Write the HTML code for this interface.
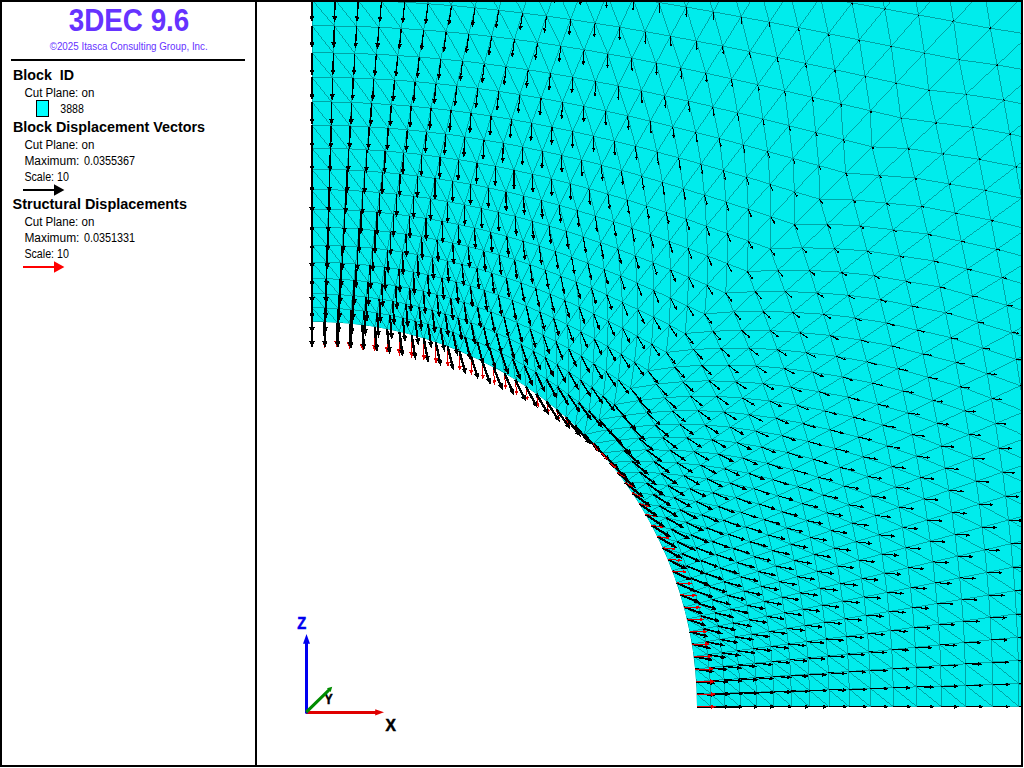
<!DOCTYPE html>
<html lang="en"><head><meta charset="utf-8"><title>3DEC 9.6</title>
<style>html,body{margin:0;padding:0;background:#fff;overflow:hidden}svg{display:block;position:absolute;left:0;top:0}text{white-space:pre}</style></head>
<body>
<svg width="1024" height="768" viewBox="0 0 1024 768" font-family='"Liberation Sans", sans-serif'>
<defs><clipPath id="v"><rect x="257" y="2" width="764" height="763"/></clipPath><clipPath id="m"><path d="M312 2L1021 2L1021 706.7L697 706.7A385 385 0 0 0 312 321.7Z"/></clipPath></defs>
<rect width="1024" height="768" fill="#fff"/>
<g clip-path="url(#v)">
<path d="M312 2L1021 2L1021 706.7L697 706.7A385 385 0 0 0 312 321.7Z" fill="#00ecec"/>
<g clip-path="url(#m)" fill="none" stroke="#00999a" stroke-width="0.85" shape-rendering="crispEdges">
<path d="M312 321.7L324.6 321.9L337.2 322.5L349.7 323.6L362.3 325L374.7 326.8L387.1 329.1L399.4 331.8L411.6 334.8L423.8 338.3L435.8 342.1L447.6 346.4L459.3 351L470.9 356L482.3 361.4L493.5 367.2L504.5 373.3L515.3 379.8L525.9 386.6L536.3 393.8L546.4 401.3L556.2 409.1L565.8 417.2L575.2 425.7L584.2 434.5L593 443.5L601.5 452.9L609.6 462.5L617.4 472.3L624.9 482.4L632.1 492.8L638.9 503.4L645.4 514.2L651.5 525.2L657.3 536.4L662.7 547.8L667.7 559.4L672.3 571.1L676.6 582.9L680.4 594.9L683.9 607.1L686.9 619.3L689.6 631.6L691.9 644L693.7 656.4L695.1 669L696.2 681.5L696.8 694.1L697 706.7M312 307.8L325.1 308L338.1 308.6L351.1 309.6L364.1 311.1L377 312.9L389.9 315.1L402.7 317.8L415.4 320.8L428 324.2L440.5 328.1L452.9 332.3L465.2 336.9L477.3 341.8L489.3 347.2L501.1 352.9L512.8 358.9L524.3 365.4L535.6 372.1L546.7 379.2L557.6 386.7L568.3 394.4L578.8 402.5L589 410.9L599.1 419.6L607.8 429.7L616.2 439.9L624.3 450.4L632 461.1L639.5 472L646.6 483.1L653.3 494.4L659.8 505.9L665.8 517.6L671.5 529.4L676.9 541.4L681.8 553.5L686.4 565.8L690.6 578.2L694.5 590.7L697.9 603.3L700.9 616L703.6 628.8L705.8 641.7L707.6 654.6L709.1 667.6L710.1 680.6L710.7 693.6L710.9 706.7M312 293.8L325.5 294L339 294.6L352.5 295.6L365.9 297L379.3 298.9L392.7 301.1L406 303.7L419.2 306.7L432.3 310.1L445.3 313.9L458.3 318L471.1 322.6L483.8 327.5L496.4 332.8L508.8 338.5L521.1 344.5L533.3 350.9L545.3 357.6L557.1 364.6L568.8 372L580.4 379.7L591.8 387.7L603 396L614.1 404.6L622.7 415.7L631 426.9L639 438.3L646.7 449.9L654.1 461.6L661.1 473.4L667.8 485.4L674.2 497.6L680.2 509.9L685.9 522.3L691.2 534.9L696.1 547.6L700.7 560.4L704.8 573.4L708.6 586.4L712 599.5L715 612.7L717.6 626L719.8 639.4L721.7 652.8L723.1 666.2L724.1 679.7L724.7 693.2L724.9 706.7M312 278.5L326 278.7L340 279.3L354 280.3L368 281.7L381.9 283.5L395.7 285.7L409.6 288.3L423.3 291.3L437 294.6L450.6 298.4L464.1 302.5L477.6 307L490.9 311.9L504.1 317.1L517.2 322.7L530.2 328.7L543.1 335L555.9 341.6L568.6 348.6L581.2 355.9L593.6 363.6L606 371.5L618.2 379.7L630.5 388.2L639 400.5L647.2 412.7L655.1 425.1L662.8 437.5L670.1 450.1L677.1 462.8L683.7 475.6L690 488.5L696 501.5L701.6 514.6L706.8 527.8L711.7 541.1L716.2 554.6L720.3 568.1L724.1 581.7L727.4 595.4L730.4 609.1L733 623L735.2 636.8L737 650.7L738.4 664.7L739.4 678.7L740 692.7L740.2 706.7M312 262.2L326.5 262.4L341.1 263L355.6 264L370.1 265.4L384.6 267.2L399 269.3L413.4 271.9L427.7 274.8L442 278.2L456.2 281.9L470.4 286L484.4 290.4L498.4 295.3L512.3 300.4L526.2 306L539.9 311.9L553.6 318.1L567.2 324.7L580.8 331.6L594.3 338.8L607.7 346.4L621.1 354.2L634.5 362.4L647.9 370.8L656.3 384.2L664.5 397.6L672.3 411L679.9 424.4L687.1 437.9L694 451.5L700.6 465.1L706.8 478.8L712.7 492.5L718.3 506.4L723.4 520.3L728.3 534.3L732.7 548.3L736.8 562.5L740.5 576.7L743.9 591L746.8 605.3L749.4 619.7L751.5 634.1L753.3 648.6L754.7 663.1L755.7 677.6L756.3 692.2L756.5 706.7M312 245L327.1 245.2L342.2 245.8L357.3 246.8L372.4 248.1L387.4 249.9L402.4 252L417.4 254.6L432.4 257.5L447.3 260.8L462.1 264.5L476.9 268.5L491.7 272.9L506.4 277.7L521 282.8L535.6 288.3L550.2 294.1L564.7 300.3L579.2 306.8L593.7 313.6L608.1 320.8L622.6 328.2L637.1 336L651.6 344.1L666.3 352.4L674.6 367.1L682.7 381.6L690.5 396.1L697.9 410.6L705.1 425L711.9 439.5L718.4 454L724.6 468.5L730.4 483.1L735.9 497.7L741 512.3L745.8 527L750.2 541.8L754.2 556.6L757.9 571.4L761.2 586.3L764.1 601.3L766.7 616.3L768.8 631.3L770.6 646.3L771.9 661.4L772.9 676.5L773.5 691.6L773.7 706.7M312 227.3L327.7 227.5L343.4 228.1L359 229L374.7 230.4L390.3 232.1L406 234.3L421.6 236.8L437.1 239.7L452.7 242.9L468.2 246.5L483.7 250.5L499.1 254.9L514.6 259.6L530 264.7L545.4 270.1L560.7 275.9L576.1 282L591.5 288.4L606.9 295.1L622.4 302.2L637.9 309.6L653.5 317.3L669.3 325.2L685.2 333.5L693.5 349.4L701.4 365.2L709.1 380.8L716.5 396.3L723.6 411.8L730.3 427.2L736.7 442.6L742.8 458L748.6 473.3L754 488.7L759.1 504.1L763.8 519.6L768.2 535L772.2 550.5L775.8 566L779 581.6L781.9 597.1L784.4 612.7L786.6 628.4L788.3 644L789.7 659.7L790.6 675.3L791.2 691L791.4 706.7M312 209.1L328.3 209.3L344.6 209.9L360.8 210.8L377.1 212.2L393.4 213.9L409.6 216L425.8 218.5L442.1 221.3L458.3 224.5L474.5 228.1L490.6 232.1L506.8 236.4L523 241L539.2 246L555.4 251.4L571.6 257.1L587.8 263.1L604.2 269.5L620.5 276.1L637 283.1L653.7 290.4L670.4 298L687.4 305.9L704.7 314L712.8 331.3L720.7 348.3L728.3 365L735.6 381.7L742.6 398.2L749.2 414.5L755.6 430.9L761.6 447.1L767.3 463.3L772.7 479.5L777.7 495.7L782.3 511.9L786.6 528.1L790.6 544.2L794.2 560.4L797.4 576.6L800.2 592.9L802.7 609.1L804.8 625.3L806.5 641.6L807.9 657.9L808.8 674.1L809.4 690.4L809.6 706.7M312 189.5L328.9 189.7L345.8 190.3L362.8 191.2L379.7 192.5L396.6 194.2L413.5 196.3L430.4 198.7L447.4 201.5L464.3 204.7L481.2 208.3L498.1 212.2L515.1 216.4L532.1 221L549.1 226L566.1 231.2L583.3 236.9L600.5 242.8L617.8 249.1L635.2 255.7L652.8 262.5L670.6 269.7L688.6 277.2L707 285L725.7 293L733.7 311.7L741.5 330.1L749 348.1L756.2 365.9L763 383.5L769.6 400.9L775.9 418.2L781.8 435.4L787.5 452.6L792.7 469.6L797.7 486.6L802.3 503.6L806.5 520.6L810.4 537.5L814 554.4L817.2 571.3L820 588.3L822.4 605.2L824.5 622.1L826.2 639L827.5 655.9L828.4 672.9L829 689.8L829.2 706.7M312 169.3L329.6 169.5L347.2 170L364.8 171L382.4 172.3L400 174L417.6 176L435.2 178.4L452.8 181.2L470.5 184.3L488.1 187.8L505.9 191.6L523.6 195.8L541.4 200.4L559.3 205.3L577.2 210.5L595.3 216L613.5 221.9L631.8 228.1L650.3 234.6L669.1 241.4L688.1 248.4L707.4 255.8L727.1 263.5L747.3 271.4L755.2 291.6L762.9 311.3L770.3 330.6L777.3 349.6L784.1 368.4L790.6 386.9L796.8 405.2L802.7 423.4L808.2 441.5L813.4 459.4L818.3 477.3L822.9 495.1L827.1 512.8L830.9 530.6L834.4 548.2L837.5 565.9L840.3 583.5L842.7 601.1L844.7 618.7L846.4 636.3L847.7 653.9L848.7 671.5L849.2 689.1L849.4 706.7M312 148.1L330.3 148.3L348.6 148.8L366.9 149.8L385.2 151L403.5 152.7L421.8 154.7L440.2 157.1L458.5 159.8L477 162.9L495.4 166.3L514 170.1L532.5 174.3L551.2 178.7L570 183.5L588.9 188.7L607.9 194.1L627.1 199.9L646.6 206L666.2 212.4L686.1 219.1L706.4 226.1L727.1 233.4L748.2 240.9L770 248.7L777.8 270.5L785.3 291.6L792.6 312.3L799.6 332.6L806.3 352.5L812.7 372.1L818.8 391.6L824.6 410.8L830 429.8L835.2 448.7L840 467.5L844.4 486.2L848.6 504.7L852.4 523.3L855.8 541.7L858.9 560.2L861.6 578.5L864 596.9L866 615.2L867.7 633.5L868.9 651.8L869.9 670.1L870.4 688.4L870.6 706.7M312 125.3L331 125.5L350.1 126L369.1 126.9L388.2 128.2L407.2 129.8L426.4 131.8L445.5 134.1L464.7 136.8L483.9 139.9L503.3 143.2L522.7 147L542.2 151L561.8 155.4L581.5 160.2L601.4 165.2L621.5 170.6L641.8 176.3L662.4 182.3L683.3 188.6L704.5 195.2L726.1 202.1L748.3 209.2L771 216.7L794.3 224.4L802 247.7L809.5 270.4L816.6 292.6L823.5 314.2L830.1 335.4L836.4 356.3L842.4 376.9L848.1 397.2L853.5 417.3L858.5 437.2L863.3 456.9L867.7 476.5L871.7 496L875.5 515.4L878.8 534.8L881.9 554L884.6 573.2L886.9 592.3L888.9 611.5L890.5 630.5L891.8 649.6L892.7 668.6L893.2 687.7L893.4 706.7M312 101.8L331.8 102L351.6 102.5L371.4 103.4L391.3 104.6L411.1 106.2L431.1 108.2L451 110.5L471 113.1L491.2 116.1L511.3 119.4L531.6 123.1L552.1 127.1L572.6 131.4L593.4 136.1L614.3 141.1L635.5 146.4L657 152L678.7 157.8L700.9 164L723.4 170.5L746.5 177.3L770.1 184.3L794.4 191.6L819.5 199.2L827.1 224.3L834.4 248.6L841.4 272.2L848.2 295.3L854.7 317.8L860.9 340L866.7 361.7L872.3 383.2L877.6 404.4L882.6 425.3L887.3 446.1L891.6 466.6L895.6 487.1L899.3 507.4L902.6 527.5L905.6 547.7L908.2 567.7L910.5 587.6L912.5 607.6L914.1 627.4L915.3 647.3L916.2 667.1L916.7 686.9L916.9 706.7M312 77.3L332.6 77.5L353.2 78L373.8 78.9L394.5 80.1L415.2 81.7L435.9 83.6L456.8 85.8L477.7 88.4L498.7 91.4L519.8 94.6L541 98.2L562.4 102.2L584 106.4L605.8 111L627.8 115.9L650.1 121.1L672.7 126.6L695.8 132.4L719.2 138.4L743.1 144.8L767.7 151.5L792.9 158.4L818.8 165.6L845.7 173L853.1 199.9L860.3 225.8L867.2 251L873.9 275.6L880.3 299.5L886.3 322.9L892.1 346L897.6 368.6L902.8 390.9L907.7 412.9L912.3 434.7L916.5 456.3L920.5 477.7L924.1 498.9L927.3 520L930.3 541L932.9 561.9L935.1 582.8L937 603.5L938.6 624.2L939.8 644.9L940.7 665.5L941.2 686.1L941.4 706.7M312 52.8L333.4 53L354.8 53.5L376.3 54.3L397.7 55.5L419.3 57.1L440.8 59L462.5 61.2L484.3 63.7L506.2 66.6L528.2 69.8L550.4 73.4L572.7 77.2L595.3 81.4L618.1 85.9L641.3 90.7L664.7 95.8L688.5 101.2L712.8 106.9L737.5 112.9L762.9 119.1L788.9 125.6L815.6 132.4L843.3 139.5L871.9 146.8L879.2 175.4L886.3 203.1L893.1 229.8L899.6 255.8L905.8 281.2L911.8 305.9L917.5 330.2L922.9 354L928 377.4L932.8 400.6L937.3 423.4L941.5 446L945.3 468.3L948.9 490.5L952.1 512.5L955 534.4L957.5 556.2L959.7 577.9L961.6 599.4L963.2 621L964.4 642.4L965.2 663.9L965.7 685.3L965.9 706.7M312 25.8L334.3 26L356.6 26.5L378.9 27.3L401.3 28.5L423.7 30L446.2 31.8L468.8 34L491.6 36.5L514.4 39.3L537.5 42.5L560.7 46L584.1 49.7L607.8 53.8L631.8 58.2L656.1 62.9L680.8 67.9L705.9 73.2L731.6 78.8L757.8 84.7L784.6 90.8L812.2 97.2L840.7 103.8L870.2 110.7L900.8 117.9L908 148.5L914.9 178L921.5 206.5L927.9 234.1L934 260.9L939.9 287.1L945.5 312.8L950.8 337.9L955.8 362.6L960.5 386.9L964.9 410.9L969 434.6L972.7 458L976.2 481.2L979.4 504.3L982.2 527.1L984.7 549.9L986.9 572.5L988.7 595L990.2 617.4L991.4 639.8L992.2 662.1L992.7 684.4L992.9 706.7M312 -0.3L335.1 -0.1L358.3 0.4L381.5 1.2L404.7 2.3L428 3.8L451.5 5.6L475 7.8L498.6 10.2L522.4 13L546.4 16.1L570.7 19.5L595.1 23.2L619.9 27.2L645 31.5L670.4 36.1L696.3 41L722.7 46.2L749.7 51.6L777.3 57.4L805.6 63.4L834.8 69.7L864.9 76.2L896.2 83L928.7 90L935.7 122.5L942.5 153.8L949 183.9L955.3 213.1L961.3 241.4L967.1 269L972.5 296L977.7 322.4L982.6 348.3L987.2 373.7L991.5 398.8L995.5 423.6L999.2 448L1002.6 472.3L1005.7 496.3L1008.5 520.1L1010.9 543.7L1013.1 567.2L1014.9 590.7L1016.4 614L1017.5 637.2L1018.3 660.4L1018.8 683.6L1019 706.7M312 -28.6L336.1 -28.4L360.2 -27.9L384.3 -27.1L408.5 -26L432.7 -24.6L457.1 -22.8L481.6 -20.7L506.3 -18.3L531.1 -15.6L556.2 -12.6L581.5 -9.3L607.1 -5.6L633 -1.7L659.3 2.5L686 7L713.2 11.8L741 16.9L769.3 22.2L798.5 27.8L828.4 33.7L859.3 39.9L891.2 46.2L924.4 52.9L959 59.7L965.8 94.3L972.5 127.5L978.8 159.4L985 190.3L990.9 220.2L996.5 249.4L1001.8 277.7L1006.9 305.5L1011.7 332.7L1016.2 359.4L1020.4 385.7L1024.3 411.6L1028 437.2L1031.3 462.5L1034.3 487.6L1037 512.4L1039.4 537.1L1041.5 561.6L1043.3 586L1044.7 610.2L1045.8 634.4L1046.6 658.5L1047.1 682.6L1047.3 706.7M619.5 -35.6L646.6 -31.7L674.1 -27.6L702.1 -23.2L730.7 -18.5L759.9 -13.6L789.8 -8.4L820.5 -2.9L852.1 2.9L884.7 8.9L918.5 15.1L953.7 21.6L990.4 28.3L997.1 65L1003.6 100.2L1009.8 134L1015.8 166.6L1021.6 198.2L1027.1 228.9L1032.3 258.8L1037.2 288L1041.9 316.6L1046.3 344.6L1050.4 372.1L1054.3 399.2L1057.8 426M843.4 -34.8L876.7 -29.2L911.2 -23.4L946.9 -17.3L984.2 -11L1023.2 -4.5L1029.7 34.5L1036 71.8L1042.1 107.5L1047.9 142L1053.5 175.3L1058.9 207.7"/>
<path d="M312 321.7L312 -425.2M324.6 321.9L349.1 -425.1M337.2 322.5L386.2 -424.8M349.7 323.6L423.4 -424.2M362.3 325L460.8 -423.5M374.7 326.8L498.4 -422.5M387.1 329.1L536.4 -421.3M399.4 331.8L574.7 -419.8M411.6 334.8L613.4 -418.2M423.8 338.3L652.7 -416.3M435.8 342.1L692.5 -414.2M447.6 346.4L733 -412M459.3 351L774.3 -409.5M470.9 356L816.5 -406.8M482.3 361.4L859.7 -403.9M493.5 367.2L904 -400.8M504.5 373.3L949.5 -397.5M515.3 379.8L996.5 -394M525.9 386.6L1045 -390.4M536.3 393.8L1095.4 -386.5M546.4 401.3L1147.7 -382.5M556.2 409.1L1202.4 -378.3M565.8 417.2L1259.6 -373.9M575.2 425.7L1319.8 -369.3M584.2 434.5L1383.3 -364.6M593 443.5L1388 -301.1M601.5 452.9L1392.6 -240.9M609.6 462.5L1397 -183.7M617.4 472.3L1401.2 -129M624.9 482.4L1405.2 -76.7M632.1 492.8L1409.1 -26.3M638.9 503.4L1412.7 22.2M645.4 514.2L1416.2 69.2M651.5 525.2L1419.5 114.7M657.3 536.4L1422.6 159M662.7 547.8L1425.5 202.2M667.7 559.4L1428.2 244.4M672.3 571.1L1430.7 285.7M676.6 582.9L1432.9 326.2M680.4 594.9L1435 366M683.9 607.1L1436.9 405.3M686.9 619.3L1438.5 444M689.6 631.6L1440 482.3M691.9 644L1441.2 520.3M693.7 656.4L1442.2 557.9M695.1 669L1442.9 595.3M696.2 681.5L1443.5 632.5M696.8 694.1L1443.8 669.6M697 706.7L1443.9 706.7"/>
<path d="M312 307.8L324.6 321.9M325.1 308L337.2 322.5M338.1 308.6L349.7 323.6M351.1 309.6L362.3 325M364.1 311.1L374.7 326.8M377 312.9L387.1 329.1M389.9 315.1L399.4 331.8M402.7 317.8L411.6 334.8M415.4 320.8L423.8 338.3M428 324.2L435.8 342.1M440.5 328.1L447.6 346.4M452.9 332.3L459.3 351M465.2 336.9L470.9 356M477.3 341.8L482.3 361.4M489.3 347.2L493.5 367.2M501.1 352.9L504.5 373.3M512.8 358.9L515.3 379.8M524.3 365.4L525.9 386.6M535.6 372.1L536.3 393.8M546.7 379.2L546.4 401.3M557.6 386.7L556.2 409.1M568.3 394.4L565.8 417.2M578.8 402.5L575.2 425.7M589 410.9L584.2 434.5M584.2 434.5L607.8 429.7M593 443.5L616.2 439.9M601.5 452.9L624.3 450.4M609.6 462.5L632 461.1M617.4 472.3L639.5 472M624.9 482.4L646.6 483.1M632.1 492.8L653.3 494.4M638.9 503.4L659.8 505.9M645.4 514.2L665.8 517.6M651.5 525.2L671.5 529.4M657.3 536.4L676.9 541.4M662.7 547.8L681.8 553.5M667.7 559.4L686.4 565.8M672.3 571.1L690.6 578.2M676.6 582.9L694.5 590.7M680.4 594.9L697.9 603.3M683.9 607.1L700.9 616M686.9 619.3L703.6 628.8M689.6 631.6L705.8 641.7M691.9 644L707.6 654.6M693.7 656.4L709.1 667.6M695.1 669L710.1 680.6M696.2 681.5L710.7 693.6M696.8 694.1L710.9 706.7M312 293.8L325.1 308M325.5 294L338.1 308.6M339 294.6L351.1 309.6M352.5 295.6L364.1 311.1M365.9 297L377 312.9M379.3 298.9L389.9 315.1M392.7 301.1L402.7 317.8M406 303.7L415.4 320.8M419.2 306.7L428 324.2M432.3 310.1L440.5 328.1M445.3 313.9L452.9 332.3M458.3 318L465.2 336.9M471.1 322.6L477.3 341.8M483.8 327.5L489.3 347.2M496.4 332.8L501.1 352.9M508.8 338.5L512.8 358.9M521.1 344.5L524.3 365.4M533.3 350.9L535.6 372.1M545.3 357.6L546.7 379.2M557.1 364.6L557.6 386.7M568.8 372L568.3 394.4M580.4 379.7L578.8 402.5M591.8 387.7L589 410.9M603 396L599.1 419.6M599.1 419.6L622.7 415.7M607.8 429.7L631 426.9M616.2 439.9L639 438.3M624.3 450.4L646.7 449.9M632 461.1L654.1 461.6M639.5 472L661.1 473.4M646.6 483.1L667.8 485.4M653.3 494.4L674.2 497.6M659.8 505.9L680.2 509.9M665.8 517.6L685.9 522.3M671.5 529.4L691.2 534.9M676.9 541.4L696.1 547.6M681.8 553.5L700.7 560.4M686.4 565.8L704.8 573.4M690.6 578.2L708.6 586.4M694.5 590.7L712 599.5M697.9 603.3L715 612.7M700.9 616L717.6 626M703.6 628.8L719.8 639.4M705.8 641.7L721.7 652.8M707.6 654.6L723.1 666.2M709.1 667.6L724.1 679.7M710.1 680.6L724.7 693.2M710.7 693.6L724.9 706.7M312 278.5L325.5 294M326 278.7L339 294.6M340 279.3L352.5 295.6M354 280.3L365.9 297M368 281.7L379.3 298.9M381.9 283.5L392.7 301.1M395.7 285.7L406 303.7M409.6 288.3L419.2 306.7M423.3 291.3L432.3 310.1M437 294.6L445.3 313.9M450.6 298.4L458.3 318M464.1 302.5L471.1 322.6M477.6 307L483.8 327.5M490.9 311.9L496.4 332.8M504.1 317.1L508.8 338.5M517.2 322.7L521.1 344.5M530.2 328.7L533.3 350.9M543.1 335L545.3 357.6M555.9 341.6L557.1 364.6M568.6 348.6L568.8 372M581.2 355.9L580.4 379.7M593.6 363.6L591.8 387.7M606 371.5L603 396M618.2 379.7L614.1 404.6M614.1 404.6L639 400.5M622.7 415.7L647.2 412.7M631 426.9L655.1 425.1M639 438.3L662.8 437.5M646.7 449.9L670.1 450.1M654.1 461.6L677.1 462.8M661.1 473.4L683.7 475.6M667.8 485.4L690 488.5M674.2 497.6L696 501.5M680.2 509.9L701.6 514.6M685.9 522.3L706.8 527.8M691.2 534.9L711.7 541.1M696.1 547.6L716.2 554.6M700.7 560.4L720.3 568.1M704.8 573.4L724.1 581.7M708.6 586.4L727.4 595.4M712 599.5L730.4 609.1M715 612.7L733 623M717.6 626L735.2 636.8M719.8 639.4L737 650.7M721.7 652.8L738.4 664.7M723.1 666.2L739.4 678.7M724.1 679.7L740 692.7M724.7 693.2L740.2 706.7M312 262.2L326 278.7M326.5 262.4L340 279.3M341.1 263L354 280.3M355.6 264L368 281.7M370.1 265.4L381.9 283.5M384.6 267.2L395.7 285.7M399 269.3L409.6 288.3M413.4 271.9L423.3 291.3M427.7 274.8L437 294.6M442 278.2L450.6 298.4M456.2 281.9L464.1 302.5M470.4 286L477.6 307M484.4 290.4L490.9 311.9M498.4 295.3L504.1 317.1M512.3 300.4L517.2 322.7M526.2 306L530.2 328.7M539.9 311.9L543.1 335M553.6 318.1L555.9 341.6M567.2 324.7L568.6 348.6M580.8 331.6L581.2 355.9M594.3 338.8L593.6 363.6M607.7 346.4L606 371.5M621.1 354.2L618.2 379.7M634.5 362.4L630.5 388.2M630.5 388.2L656.3 384.2M639 400.5L664.5 397.6M647.2 412.7L672.3 411M655.1 425.1L679.9 424.4M662.8 437.5L687.1 437.9M670.1 450.1L694 451.5M677.1 462.8L700.6 465.1M683.7 475.6L706.8 478.8M690 488.5L712.7 492.5M696 501.5L718.3 506.4M701.6 514.6L723.4 520.3M706.8 527.8L728.3 534.3M711.7 541.1L732.7 548.3M716.2 554.6L736.8 562.5M720.3 568.1L740.5 576.7M724.1 581.7L743.9 591M727.4 595.4L746.8 605.3M730.4 609.1L749.4 619.7M733 623L751.5 634.1M735.2 636.8L753.3 648.6M737 650.7L754.7 663.1M738.4 664.7L755.7 677.6M739.4 678.7L756.3 692.2M740 692.7L756.5 706.7M312 245L326.5 262.4M327.1 245.2L341.1 263M342.2 245.8L355.6 264M357.3 246.8L370.1 265.4M372.4 248.1L384.6 267.2M387.4 249.9L399 269.3M402.4 252L413.4 271.9M417.4 254.6L427.7 274.8M432.4 257.5L442 278.2M447.3 260.8L456.2 281.9M462.1 264.5L470.4 286M476.9 268.5L484.4 290.4M491.7 272.9L498.4 295.3M506.4 277.7L512.3 300.4M521 282.8L526.2 306M535.6 288.3L539.9 311.9M550.2 294.1L553.6 318.1M564.7 300.3L567.2 324.7M579.2 306.8L580.8 331.6M593.7 313.6L594.3 338.8M608.1 320.8L607.7 346.4M622.6 328.2L621.1 354.2M637.1 336L634.5 362.4M651.6 344.1L647.9 370.8M647.9 370.8L674.6 367.1M656.3 384.2L682.7 381.6M664.5 397.6L690.5 396.1M672.3 411L697.9 410.6M679.9 424.4L705.1 425M687.1 437.9L711.9 439.5M694 451.5L718.4 454M700.6 465.1L724.6 468.5M706.8 478.8L730.4 483.1M712.7 492.5L735.9 497.7M718.3 506.4L741 512.3M723.4 520.3L745.8 527M728.3 534.3L750.2 541.8M732.7 548.3L754.2 556.6M736.8 562.5L757.9 571.4M740.5 576.7L761.2 586.3M743.9 591L764.1 601.3M746.8 605.3L766.7 616.3M749.4 619.7L768.8 631.3M751.5 634.1L770.6 646.3M753.3 648.6L771.9 661.4M754.7 663.1L772.9 676.5M755.7 677.6L773.5 691.6M756.3 692.2L773.7 706.7M312 227.3L327.1 245.2M327.7 227.5L342.2 245.8M343.4 228.1L357.3 246.8M359 229L372.4 248.1M374.7 230.4L387.4 249.9M390.3 232.1L402.4 252M406 234.3L417.4 254.6M421.6 236.8L432.4 257.5M437.1 239.7L447.3 260.8M452.7 242.9L462.1 264.5M468.2 246.5L476.9 268.5M483.7 250.5L491.7 272.9M499.1 254.9L506.4 277.7M514.6 259.6L521 282.8M530 264.7L535.6 288.3M545.4 270.1L550.2 294.1M560.7 275.9L564.7 300.3M576.1 282L579.2 306.8M591.5 288.4L593.7 313.6M606.9 295.1L608.1 320.8M622.4 302.2L622.6 328.2M637.9 309.6L637.1 336M653.5 317.3L651.6 344.1M669.3 325.2L666.3 352.4M666.3 352.4L693.5 349.4M674.6 367.1L701.4 365.2M682.7 381.6L709.1 380.8M690.5 396.1L716.5 396.3M697.9 410.6L723.6 411.8M705.1 425L730.3 427.2M711.9 439.5L736.7 442.6M718.4 454L742.8 458M724.6 468.5L748.6 473.3M730.4 483.1L754 488.7M735.9 497.7L759.1 504.1M741 512.3L763.8 519.6M745.8 527L768.2 535M750.2 541.8L772.2 550.5M754.2 556.6L775.8 566M757.9 571.4L779 581.6M761.2 586.3L781.9 597.1M764.1 601.3L784.4 612.7M766.7 616.3L786.6 628.4M768.8 631.3L788.3 644M770.6 646.3L789.7 659.7M771.9 661.4L790.6 675.3M772.9 676.5L791.2 691M773.5 691.6L791.4 706.7M312 209.1L327.7 227.5M328.3 209.3L343.4 228.1M344.6 209.9L359 229M360.8 210.8L374.7 230.4M377.1 212.2L390.3 232.1M393.4 213.9L406 234.3M409.6 216L421.6 236.8M425.8 218.5L437.1 239.7M442.1 221.3L452.7 242.9M458.3 224.5L468.2 246.5M474.5 228.1L483.7 250.5M490.6 232.1L499.1 254.9M506.8 236.4L514.6 259.6M523 241L530 264.7M539.2 246L545.4 270.1M555.4 251.4L560.7 275.9M571.6 257.1L576.1 282M587.8 263.1L591.5 288.4M604.2 269.5L606.9 295.1M620.5 276.1L622.4 302.2M637 283.1L637.9 309.6M653.7 290.4L653.5 317.3M670.4 298L669.3 325.2M687.4 305.9L685.2 333.5M685.2 333.5L712.8 331.3M693.5 349.4L720.7 348.3M701.4 365.2L728.3 365M709.1 380.8L735.6 381.7M716.5 396.3L742.6 398.2M723.6 411.8L749.2 414.5M730.3 427.2L755.6 430.9M736.7 442.6L761.6 447.1M742.8 458L767.3 463.3M748.6 473.3L772.7 479.5M754 488.7L777.7 495.7M759.1 504.1L782.3 511.9M763.8 519.6L786.6 528.1M768.2 535L790.6 544.2M772.2 550.5L794.2 560.4M775.8 566L797.4 576.6M779 581.6L800.2 592.9M781.9 597.1L802.7 609.1M784.4 612.7L804.8 625.3M786.6 628.4L806.5 641.6M788.3 644L807.9 657.9M789.7 659.7L808.8 674.1M790.6 675.3L809.4 690.4M791.2 691L809.6 706.7M312 189.5L328.3 209.3M328.9 189.7L344.6 209.9M345.8 190.3L360.8 210.8M362.8 191.2L377.1 212.2M379.7 192.5L393.4 213.9M396.6 194.2L409.6 216M413.5 196.3L425.8 218.5M430.4 198.7L442.1 221.3M447.4 201.5L458.3 224.5M464.3 204.7L474.5 228.1M481.2 208.3L490.6 232.1M498.1 212.2L506.8 236.4M515.1 216.4L523 241M532.1 221L539.2 246M549.1 226L555.4 251.4M566.1 231.2L571.6 257.1M583.3 236.9L587.8 263.1M600.5 242.8L604.2 269.5M617.8 249.1L620.5 276.1M635.2 255.7L637 283.1M652.8 262.5L653.7 290.4M670.6 269.7L670.4 298M688.6 277.2L687.4 305.9M707 285L704.7 314M704.7 314L733.7 311.7M712.8 331.3L741.5 330.1M720.7 348.3L749 348.1M728.3 365L756.2 365.9M735.6 381.7L763 383.5M742.6 398.2L769.6 400.9M749.2 414.5L775.9 418.2M755.6 430.9L781.8 435.4M761.6 447.1L787.5 452.6M767.3 463.3L792.7 469.6M772.7 479.5L797.7 486.6M777.7 495.7L802.3 503.6M782.3 511.9L806.5 520.6M786.6 528.1L810.4 537.5M790.6 544.2L814 554.4M794.2 560.4L817.2 571.3M797.4 576.6L820 588.3M800.2 592.9L822.4 605.2M802.7 609.1L824.5 622.1M804.8 625.3L826.2 639M806.5 641.6L827.5 655.9M807.9 657.9L828.4 672.9M808.8 674.1L829 689.8M809.4 690.4L829.2 706.7M312 169.3L328.9 189.7M329.6 169.5L345.8 190.3M347.2 170L362.8 191.2M364.8 171L379.7 192.5M382.4 172.3L396.6 194.2M400 174L413.5 196.3M417.6 176L430.4 198.7M435.2 178.4L447.4 201.5M452.8 181.2L464.3 204.7M470.5 184.3L481.2 208.3M488.1 187.8L498.1 212.2M505.9 191.6L515.1 216.4M523.6 195.8L532.1 221M541.4 200.4L549.1 226M559.3 205.3L566.1 231.2M577.2 210.5L583.3 236.9M595.3 216L600.5 242.8M613.5 221.9L617.8 249.1M631.8 228.1L635.2 255.7M650.3 234.6L652.8 262.5M669.1 241.4L670.6 269.7M688.1 248.4L688.6 277.2M707.4 255.8L707 285M727.1 263.5L725.7 293M725.7 293L755.2 291.6M733.7 311.7L762.9 311.3M741.5 330.1L770.3 330.6M749 348.1L777.3 349.6M756.2 365.9L784.1 368.4M763 383.5L790.6 386.9M769.6 400.9L796.8 405.2M775.9 418.2L802.7 423.4M781.8 435.4L808.2 441.5M787.5 452.6L813.4 459.4M792.7 469.6L818.3 477.3M797.7 486.6L822.9 495.1M802.3 503.6L827.1 512.8M806.5 520.6L830.9 530.6M810.4 537.5L834.4 548.2M814 554.4L837.5 565.9M817.2 571.3L840.3 583.5M820 588.3L842.7 601.1M822.4 605.2L844.7 618.7M824.5 622.1L846.4 636.3M826.2 639L847.7 653.9M827.5 655.9L848.7 671.5M828.4 672.9L849.2 689.1M829 689.8L849.4 706.7M312 148.1L329.6 169.5M330.3 148.3L347.2 170M348.6 148.8L364.8 171M366.9 149.8L382.4 172.3M385.2 151L400 174M403.5 152.7L417.6 176M421.8 154.7L435.2 178.4M440.2 157.1L452.8 181.2M458.5 159.8L470.5 184.3M477 162.9L488.1 187.8M495.4 166.3L505.9 191.6M514 170.1L523.6 195.8M532.5 174.3L541.4 200.4M551.2 178.7L559.3 205.3M570 183.5L577.2 210.5M588.9 188.7L595.3 216M607.9 194.1L613.5 221.9M627.1 199.9L631.8 228.1M646.6 206L650.3 234.6M666.2 212.4L669.1 241.4M686.1 219.1L688.1 248.4M706.4 226.1L707.4 255.8M727.1 233.4L727.1 263.5M748.2 240.9L747.3 271.4M747.3 271.4L777.8 270.5M755.2 291.6L785.3 291.6M762.9 311.3L792.6 312.3M770.3 330.6L799.6 332.6M777.3 349.6L806.3 352.5M784.1 368.4L812.7 372.1M790.6 386.9L818.8 391.6M796.8 405.2L824.6 410.8M802.7 423.4L830 429.8M808.2 441.5L835.2 448.7M813.4 459.4L840 467.5M818.3 477.3L844.4 486.2M822.9 495.1L848.6 504.7M827.1 512.8L852.4 523.3M830.9 530.6L855.8 541.7M834.4 548.2L858.9 560.2M837.5 565.9L861.6 578.5M840.3 583.5L864 596.9M842.7 601.1L866 615.2M844.7 618.7L867.7 633.5M846.4 636.3L868.9 651.8M847.7 653.9L869.9 670.1M848.7 671.5L870.4 688.4M849.2 689.1L870.6 706.7M312 125.3L330.3 148.3M331 125.5L348.6 148.8M350.1 126L366.9 149.8M369.1 126.9L385.2 151M388.2 128.2L403.5 152.7M407.2 129.8L421.8 154.7M426.4 131.8L440.2 157.1M445.5 134.1L458.5 159.8M464.7 136.8L477 162.9M483.9 139.9L495.4 166.3M503.3 143.2L514 170.1M522.7 147L532.5 174.3M542.2 151L551.2 178.7M561.8 155.4L570 183.5M581.5 160.2L588.9 188.7M601.4 165.2L607.9 194.1M621.5 170.6L627.1 199.9M641.8 176.3L646.6 206M662.4 182.3L666.2 212.4M683.3 188.6L686.1 219.1M704.5 195.2L706.4 226.1M726.1 202.1L727.1 233.4M748.3 209.2L748.2 240.9M771 216.7L770 248.7M770 248.7L802 247.7M777.8 270.5L809.5 270.4M785.3 291.6L816.6 292.6M792.6 312.3L823.5 314.2M799.6 332.6L830.1 335.4M806.3 352.5L836.4 356.3M812.7 372.1L842.4 376.9M818.8 391.6L848.1 397.2M824.6 410.8L853.5 417.3M830 429.8L858.5 437.2M835.2 448.7L863.3 456.9M840 467.5L867.7 476.5M844.4 486.2L871.7 496M848.6 504.7L875.5 515.4M852.4 523.3L878.8 534.8M855.8 541.7L881.9 554M858.9 560.2L884.6 573.2M861.6 578.5L886.9 592.3M864 596.9L888.9 611.5M866 615.2L890.5 630.5M867.7 633.5L891.8 649.6M868.9 651.8L892.7 668.6M869.9 670.1L893.2 687.7M870.4 688.4L893.4 706.7M312 101.8L331 125.5M331.8 102L350.1 126M351.6 102.5L369.1 126.9M371.4 103.4L388.2 128.2M391.3 104.6L407.2 129.8M411.1 106.2L426.4 131.8M431.1 108.2L445.5 134.1M451 110.5L464.7 136.8M471 113.1L483.9 139.9M491.2 116.1L503.3 143.2M511.3 119.4L522.7 147M531.6 123.1L542.2 151M552.1 127.1L561.8 155.4M572.6 131.4L581.5 160.2M593.4 136.1L601.4 165.2M614.3 141.1L621.5 170.6M635.5 146.4L641.8 176.3M657 152L662.4 182.3M678.7 157.8L683.3 188.6M700.9 164L704.5 195.2M723.4 170.5L726.1 202.1M746.5 177.3L748.3 209.2M770.1 184.3L771 216.7M794.4 191.6L794.3 224.4M794.3 224.4L827.1 224.3M802 247.7L834.4 248.6M809.5 270.4L841.4 272.2M816.6 292.6L848.2 295.3M823.5 314.2L854.7 317.8M830.1 335.4L860.9 340M836.4 356.3L866.7 361.7M842.4 376.9L872.3 383.2M848.1 397.2L877.6 404.4M853.5 417.3L882.6 425.3M858.5 437.2L887.3 446.1M863.3 456.9L891.6 466.6M867.7 476.5L895.6 487.1M871.7 496L899.3 507.4M875.5 515.4L902.6 527.5M878.8 534.8L905.6 547.7M881.9 554L908.2 567.7M884.6 573.2L910.5 587.6M886.9 592.3L912.5 607.6M888.9 611.5L914.1 627.4M890.5 630.5L915.3 647.3M891.8 649.6L916.2 667.1M892.7 668.6L916.7 686.9M893.2 687.7L916.9 706.7M312 77.3L331.8 102M332.6 77.5L351.6 102.5M353.2 78L371.4 103.4M373.8 78.9L391.3 104.6M394.5 80.1L411.1 106.2M415.2 81.7L431.1 108.2M435.9 83.6L451 110.5M456.8 85.8L471 113.1M477.7 88.4L491.2 116.1M498.7 91.4L511.3 119.4M519.8 94.6L531.6 123.1M541 98.2L552.1 127.1M562.4 102.2L572.6 131.4M584 106.4L593.4 136.1M605.8 111L614.3 141.1M627.8 115.9L635.5 146.4M650.1 121.1L657 152M672.7 126.6L678.7 157.8M695.8 132.4L700.9 164M719.2 138.4L723.4 170.5M743.1 144.8L746.5 177.3M767.7 151.5L770.1 184.3M792.9 158.4L794.4 191.6M818.8 165.6L819.5 199.2M819.5 199.2L853.1 199.9M827.1 224.3L860.3 225.8M834.4 248.6L867.2 251M841.4 272.2L873.9 275.6M848.2 295.3L880.3 299.5M854.7 317.8L886.3 322.9M860.9 340L892.1 346M866.7 361.7L897.6 368.6M872.3 383.2L902.8 390.9M877.6 404.4L907.7 412.9M882.6 425.3L912.3 434.7M887.3 446.1L916.5 456.3M891.6 466.6L920.5 477.7M895.6 487.1L924.1 498.9M899.3 507.4L927.3 520M902.6 527.5L930.3 541M905.6 547.7L932.9 561.9M908.2 567.7L935.1 582.8M910.5 587.6L937 603.5M912.5 607.6L938.6 624.2M914.1 627.4L939.8 644.9M915.3 647.3L940.7 665.5M916.2 667.1L941.2 686.1M916.7 686.9L941.4 706.7M312 52.8L332.6 77.5M333.4 53L353.2 78M354.8 53.5L373.8 78.9M376.3 54.3L394.5 80.1M397.7 55.5L415.2 81.7M419.3 57.1L435.9 83.6M440.8 59L456.8 85.8M462.5 61.2L477.7 88.4M484.3 63.7L498.7 91.4M506.2 66.6L519.8 94.6M528.2 69.8L541 98.2M550.4 73.4L562.4 102.2M572.7 77.2L584 106.4M595.3 81.4L605.8 111M618.1 85.9L627.8 115.9M641.3 90.7L650.1 121.1M664.7 95.8L672.7 126.6M688.5 101.2L695.8 132.4M712.8 106.9L719.2 138.4M737.5 112.9L743.1 144.8M762.9 119.1L767.7 151.5M788.9 125.6L792.9 158.4M815.6 132.4L818.8 165.6M843.3 139.5L845.7 173M845.7 173L879.2 175.4M853.1 199.9L886.3 203.1M860.3 225.8L893.1 229.8M867.2 251L899.6 255.8M873.9 275.6L905.8 281.2M880.3 299.5L911.8 305.9M886.3 322.9L917.5 330.2M892.1 346L922.9 354M897.6 368.6L928 377.4M902.8 390.9L932.8 400.6M907.7 412.9L937.3 423.4M912.3 434.7L941.5 446M916.5 456.3L945.3 468.3M920.5 477.7L948.9 490.5M924.1 498.9L952.1 512.5M927.3 520L955 534.4M930.3 541L957.5 556.2M932.9 561.9L959.7 577.9M935.1 582.8L961.6 599.4M937 603.5L963.2 621M938.6 624.2L964.4 642.4M939.8 644.9L965.2 663.9M940.7 665.5L965.7 685.3M941.2 686.1L965.9 706.7M312 25.8L333.4 53M334.3 26L354.8 53.5M356.6 26.5L376.3 54.3M378.9 27.3L397.7 55.5M401.3 28.5L419.3 57.1M423.7 30L440.8 59M446.2 31.8L462.5 61.2M468.8 34L484.3 63.7M491.6 36.5L506.2 66.6M514.4 39.3L528.2 69.8M537.5 42.5L550.4 73.4M560.7 46L572.7 77.2M584.1 49.7L595.3 81.4M607.8 53.8L618.1 85.9M631.8 58.2L641.3 90.7M656.1 62.9L664.7 95.8M680.8 67.9L688.5 101.2M705.9 73.2L712.8 106.9M731.6 78.8L737.5 112.9M757.8 84.7L762.9 119.1M784.6 90.8L788.9 125.6M812.2 97.2L815.6 132.4M840.7 103.8L843.3 139.5M870.2 110.7L871.9 146.8M871.9 146.8L908 148.5M879.2 175.4L914.9 178M886.3 203.1L921.5 206.5M893.1 229.8L927.9 234.1M899.6 255.8L934 260.9M905.8 281.2L939.9 287.1M911.8 305.9L945.5 312.8M917.5 330.2L950.8 337.9M922.9 354L955.8 362.6M928 377.4L960.5 386.9M932.8 400.6L964.9 410.9M937.3 423.4L969 434.6M941.5 446L972.7 458M945.3 468.3L976.2 481.2M948.9 490.5L979.4 504.3M952.1 512.5L982.2 527.1M955 534.4L984.7 549.9M957.5 556.2L986.9 572.5M959.7 577.9L988.7 595M961.6 599.4L990.2 617.4M963.2 621L991.4 639.8M964.4 642.4L992.2 662.1M965.2 663.9L992.7 684.4M965.7 685.3L992.9 706.7M312 -0.3L334.3 26M335.1 -0.1L356.6 26.5M358.3 0.4L378.9 27.3M381.5 1.2L401.3 28.5M404.7 2.3L423.7 30M428 3.8L446.2 31.8M451.5 5.6L468.8 34M475 7.8L491.6 36.5M498.6 10.2L514.4 39.3M522.4 13L537.5 42.5M546.4 16.1L560.7 46M570.7 19.5L584.1 49.7M595.1 23.2L607.8 53.8M619.9 27.2L631.8 58.2M645 31.5L656.1 62.9M670.4 36.1L680.8 67.9M696.3 41L705.9 73.2M722.7 46.2L731.6 78.8M749.7 51.6L757.8 84.7M777.3 57.4L784.6 90.8M805.6 63.4L812.2 97.2M834.8 69.7L840.7 103.8M864.9 76.2L870.2 110.7M896.2 83L900.8 117.9M900.8 117.9L935.7 122.5M908 148.5L942.5 153.8M914.9 178L949 183.9M921.5 206.5L955.3 213.1M927.9 234.1L961.3 241.4M934 260.9L967.1 269M939.9 287.1L972.5 296M945.5 312.8L977.7 322.4M950.8 337.9L982.6 348.3M955.8 362.6L987.2 373.7M960.5 386.9L991.5 398.8M964.9 410.9L995.5 423.6M969 434.6L999.2 448M972.7 458L1002.6 472.3M976.2 481.2L1005.7 496.3M979.4 504.3L1008.5 520.1M982.2 527.1L1010.9 543.7M984.7 549.9L1013.1 567.2M986.9 572.5L1014.9 590.7M988.7 595L1016.4 614M990.2 617.4L1017.5 637.2M991.4 639.8L1018.3 660.4M992.2 662.1L1018.8 683.6M992.7 684.4L1019 706.7M312 -28.6L335.1 -0.1M336.1 -28.4L358.3 0.4M360.2 -27.9L381.5 1.2M384.3 -27.1L404.7 2.3M408.5 -26L428 3.8M432.7 -24.6L451.5 5.6M457.1 -22.8L475 7.8M481.6 -20.7L498.6 10.2M506.3 -18.3L522.4 13M531.1 -15.6L546.4 16.1M556.2 -12.6L570.7 19.5M581.5 -9.3L595.1 23.2M607.1 -5.6L619.9 27.2M633 -1.7L645 31.5M659.3 2.5L670.4 36.1M686 7L696.3 41M713.2 11.8L722.7 46.2M741 16.9L749.7 51.6M769.3 22.2L777.3 57.4M798.5 27.8L805.6 63.4M828.4 33.7L834.8 69.7M859.3 39.9L864.9 76.2M891.2 46.2L896.2 83M924.4 52.9L928.7 90M928.7 90L965.8 94.3M935.7 122.5L972.5 127.5M942.5 153.8L978.8 159.4M949 183.9L985 190.3M955.3 213.1L990.9 220.2M961.3 241.4L996.5 249.4M967.1 269L1001.8 277.7M972.5 296L1006.9 305.5M977.7 322.4L1011.7 332.7M982.6 348.3L1016.2 359.4M987.2 373.7L1020.4 385.7M991.5 398.8L1024.3 411.6M995.5 423.6L1028 437.2M999.2 448L1031.3 462.5M1002.6 472.3L1034.3 487.6M1005.7 496.3L1037 512.4M1008.5 520.1L1039.4 537.1M1010.9 543.7L1041.5 561.6M1013.1 567.2L1043.3 586M1014.9 590.7L1044.7 610.2M1016.4 614L1045.8 634.4M1017.5 637.2L1046.6 658.5M1018.3 660.4L1047.1 682.6M1018.8 683.6L1047.3 706.7M312 -58L336.1 -28.4M337 -57.8L360.2 -27.9M362.1 -57.4L384.3 -27.1M387.2 -56.6L408.5 -26M412.3 -55.5L432.7 -24.6M437.6 -54.1L457.1 -22.8M463 -52.3L481.6 -20.7M488.5 -50.3L506.3 -18.3M514.2 -48L531.1 -15.6M540.1 -45.3L556.2 -12.6M566.3 -42.4L581.5 -9.3M592.7 -39.1L607.1 -5.6M619.5 -35.6L633 -1.7M646.6 -31.7L659.3 2.5M674.1 -27.6L686 7M702.1 -23.2L713.2 11.8M730.7 -18.5L741 16.9M759.9 -13.6L769.3 22.2M789.8 -8.4L798.5 27.8M820.5 -2.9L828.4 33.7M852.1 2.9L859.3 39.9M884.7 8.9L891.2 46.2M918.5 15.1L924.4 52.9M953.7 21.6L959 59.7M959 59.7L997.1 65M965.8 94.3L1003.6 100.2M972.5 127.5L1009.8 134M978.8 159.4L1015.8 166.6M985 190.3L1021.6 198.2M990.9 220.2L1027.1 228.9M996.5 249.4L1032.3 258.8M1001.8 277.7L1037.2 288M1006.9 305.5L1041.9 316.6M1011.7 332.7L1046.3 344.6M1016.2 359.4L1050.4 372.1M1020.4 385.7L1054.3 399.2M1024.3 411.6L1057.8 426M1028 437.2L1061.1 452.4M1031.3 462.5L1064 478.6M1034.3 487.6L1066.7 504.5M1037 512.4L1069 530.2M1039.4 537.1L1071 555.7M1041.5 561.6L1072.8 581.1M1043.3 586L1074.2 606.4M1044.7 610.2L1075.3 631.5M1045.8 634.4L1076.1 656.6M1046.6 658.5L1076.5 681.7M1047.1 682.6L1076.7 706.7M604.4 -70.2L619.5 -35.6M632.4 -66.7L646.6 -31.7M660.7 -63L674.1 -27.6M689.6 -59L702.1 -23.2M719 -54.7L730.7 -18.5M748.9 -50.1L759.9 -13.6M779.6 -45.3L789.8 -8.4M811 -40.2L820.5 -2.9M843.4 -34.8L852.1 2.9M876.7 -29.2L884.7 8.9M911.2 -23.4L918.5 15.1M946.9 -17.3L953.7 21.6M984.2 -11L990.4 28.3M990.4 28.3L1029.7 34.5M997.1 65L1036 71.8M1003.6 100.2L1042.1 107.5M1009.8 134L1047.9 142M1015.8 166.6L1053.5 175.3M1021.6 198.2L1058.9 207.7M1027.1 228.9L1064 239.1M1032.3 258.8L1068.8 269.8M1037.2 288L1073.4 299.7M1041.9 316.6L1077.7 329.1M1046.3 344.6L1081.7 358M1050.4 372.1L1085.4 386.3M1054.3 399.2L1088.9 414.3M1057.8 426L1092 441.9M833.2 -73.3L843.4 -34.8M867.2 -68.1L876.7 -29.2M902.3 -62.6L911.2 -23.4M938.7 -56.9L946.9 -17.3M976.5 -51L984.2 -11M1015.9 -44.9L1023.2 -4.5M1023.2 -4.5L1063.6 2.8M1029.7 34.5L1069.7 42.2M1036 71.8L1075.6 80M1042.1 107.5L1081.3 116.4M1047.9 142L1086.8 151.5M1053.5 175.3L1092 185.5M1058.9 207.7L1096.9 218.6"/>
</g>
<path shape-rendering="crispEdges" fill="#e00000" d="M311.4 321.7L311.4 340.7L309.2 340.7L312 347.7L314.8 340.7L312.6 340.7L312.6 321.7ZM323.9 321.9L323.9 340.9L321.9 340.9L324.6 347.9L327.3 340.9L325.2 340.9L325.2 321.9ZM336.5 322.5L336.5 341.4L334.4 341.4L337.2 348.3L339.9 341.4L337.8 341.4L337.8 322.5ZM349.1 323.6L349.1 342.2L347 342.2L349.7 349.2L352.4 342.2L350.4 342.2L350.4 323.6ZM361.6 325L361.6 343.5L359.6 343.5L362.3 350.3L364.9 343.5L362.9 343.5L362.9 325ZM374.1 326.8L374.1 345L372.1 345L374.7 351.7L377.4 345L375.3 345L375.3 326.8ZM386.5 329.1L386.5 346.9L384.5 346.9L387.1 353.5L389.7 346.9L387.7 346.9L387.7 329.1ZM398.8 331.8L398.9 349.2L396.9 349.2L399.5 355.6L402 349.2L400.1 349.2L400 331.8ZM411.1 334.8L411.1 351.8L409.2 351.8L411.7 358.1L414.2 351.8L412.3 351.8L412.2 334.8ZM423.2 338.3L423.3 354.8L421.5 354.8L423.9 360.9L426.3 354.7L424.4 354.8L424.3 338.3ZM435.2 342.1L435.4 358.1L433.6 358.1L436 364L438.2 358.1L436.5 358.1L436.3 342.1ZM447.1 346.4L447.3 361.7L445.6 361.8L447.9 367.4L450.1 361.7L448.4 361.7L448.1 346.4ZM458.8 351L459.1 365.7L457.5 365.8L459.8 371.2L461.8 365.7L460.1 365.7L459.8 351ZM470.4 356L470.8 370.1L469.2 370.2L471.5 375.3L473.4 370L471.8 370.1L471.4 356ZM481.8 361.4L482.3 374.8L480.8 374.9L483 379.8L484.8 374.7L483.3 374.8L482.8 361.4ZM493 367.2L493.7 379.9L492.3 380L494.5 384.6L496.1 379.8L494.7 379.8L494 367.1ZM504 373.3L504.9 385.3L503.6 385.4L505.7 389.7L507.2 385.1L505.9 385.2L505 373.2ZM514.8 379.8L515.9 391.1L514.7 391.2L516.8 395.2L518.1 390.8L516.9 391L515.8 379.7ZM525.4 386.6L526.8 397.2L525.7 397.3L527.8 401L528.8 396.9L527.7 397L526.4 386.5ZM535.8 393.8L537.4 403.6L536.4 403.8L538.5 407.2L539.4 403.3L538.4 403.5L536.7 393.7ZM545.9 401.4L547.8 410.4L546.9 410.6L549.1 413.7L549.7 410L548.8 410.2L546.9 401.2ZM555.8 409.2L558.1 417.6L557.3 417.8L559.4 420.5L559.8 417.1L559 417.3L556.7 409ZM565.4 417.4L568.1 425L567.4 425.3L569.5 427.7L569.7 424.4L569 424.7L566.3 417.1ZM574.7 425.9L577.8 432.8L577.2 433.1L579.4 435.2L579.4 432.1L578.7 432.4L575.6 425.5ZM583.8 434.7L587.4 441L586.8 441.3L589.1 443L588.8 440.1L588.2 440.5L584.7 434.2Z"/>
<path shape-rendering="crispEdges" fill="#000" d="M310.7 321.7L310.7 340.9L309.2 340.9L312 348L314.8 340.9L313.3 340.9L313.3 321.7ZM323.3 321.9L323.6 341L322.1 341L325 348L327.6 340.9L326.1 341L325.9 321.9ZM335.9 322.6L336.5 341.5L335 341.6L338 348.5L340.5 341.4L339 341.4L338.4 322.5ZM348.5 323.6L349.4 342.4L347.9 342.5L351 349.3L353.4 342.2L351.9 342.3L351 323.5ZM361 325.1L362.3 343.8L360.8 343.9L364 350.6L366.3 343.5L364.8 343.6L363.5 324.9ZM373.5 327L375.2 345.5L373.7 345.7L377 352.3L379.1 345.2L377.6 345.3L375.9 326.7ZM385.9 329.2L387.9 347.7L386.5 347.8L389.9 354.4L391.8 347.2L390.4 347.4L388.3 329ZM398.2 331.9L400.7 350.2L399.2 350.4L402.8 356.8L404.5 349.7L403.1 349.9L400.6 331.6ZM410.5 335L413.3 353.2L411.9 353.4L415.6 359.7L417.2 352.6L415.7 352.8L412.8 334.6ZM422.6 338.5L425.9 356.5L424.5 356.8L428.3 362.9L429.7 355.8L428.3 356.1L424.9 338.1ZM434.6 342.4L438.4 360.2L437 360.5L441 366.6L442.1 359.4L440.7 359.7L436.9 341.9ZM446.5 346.7L450.8 364.3L449.4 364.6L453.5 370.5L454.5 363.4L453.1 363.7L448.8 346.1ZM458.2 351.3L463 368.8L461.6 369.2L466 374.9L466.7 367.8L465.3 368.1L460.5 350.7ZM469.8 356.4L475.2 373.6L473.8 374L478.3 379.6L478.8 372.5L477.4 372.9L472 355.7ZM481.2 361.8L487.2 378.8L485.8 379.3L490.5 384.7L490.7 377.5L489.4 378L483.4 361ZM492.4 367.6L499 384.3L497.7 384.9L502.6 390.1L502.5 383L501.2 383.5L494.6 366.7ZM503.4 373.8L510.7 390.2L509.4 390.8L514.5 395.9L514.2 388.7L512.9 389.3L505.6 372.8ZM514.2 380.3L522.2 396.5L520.9 397.1L526.2 401.9L525.6 394.8L524.3 395.4L516.4 379.2ZM524.9 387.2L533.5 403L532.2 403.7L537.7 408.3L536.8 401.2L535.6 401.9L526.9 386ZM535.2 394.4L544.5 409.9L543.3 410.6L549 415L547.8 407.9L546.6 408.7L537.3 393.1ZM545.4 401.9L555.3 417.1L554.1 417.9L560 422.1L558.5 415L557.3 415.8L547.4 400.6ZM555.3 409.8L565.9 424.6L564.7 425.4L570.7 429.4L569 422.4L567.8 423.2L557.2 408.4ZM564.9 418L576.1 432.4L574.9 433.3L581.2 437L579.1 430L578 430.9L566.8 416.5ZM574.3 426.5L586 440.5L584.9 441.4L591.3 444.8L589 438L587.9 438.9L576.1 424.9ZM583.3 435.3L595.6 448.8L594.5 449.8L601 453L598.5 446.2L597.4 447.2L585.1 433.7ZM592.1 444.4L604.9 457.4L603.8 458.4L610.4 461.4L607.6 454.7L606.6 455.8L593.9 442.7ZM600.6 453.7L613.7 466.3L612.7 467.4L619.4 470.1L616.4 463.6L615.4 464.6L602.3 452ZM608.8 463.3L622.3 475.5L621.3 476.5L628 479.1L624.8 472.6L623.9 473.7L610.4 461.6ZM616.7 473.2L630.4 484.8L629.5 485.9L636.3 488.2L632.9 481.9L631.9 483L618.2 471.4ZM624.2 483.4L638.2 494.5L637.3 495.6L644.1 497.7L640.5 491.5L639.6 492.6L625.7 481.5ZM631.4 493.7L645.6 504.3L644.7 505.4L651.5 507.3L647.8 501.3L647 502.5L632.8 491.9ZM638.3 504.3L652.6 514.4L651.8 515.5L658.5 517.2L654.7 511.4L653.9 512.5L639.6 502.5ZM644.8 515.1L659.2 524.7L658.4 525.8L665.1 527.3L661.2 521.6L660.4 522.8L646 513.3ZM650.9 526.2L665.4 535.2L664.7 536.3L671.3 537.5L667.3 532.1L666.6 533.3L652.1 524.3ZM656.7 537.4L671.2 545.8L670.6 547L677.1 548L673 542.8L672.3 543.9L657.9 535.5ZM662.2 548.8L676.7 556.7L676 557.9L682.6 558.7L678.3 553.6L677.7 554.8L663.2 546.9ZM667.2 560.3L681.7 567.7L681.1 568.9L687.6 569.5L683.3 564.6L682.7 565.8L668.2 558.4ZM671.9 572L686.4 578.9L685.8 580.1L692.2 580.5L687.8 575.8L687.3 577L672.8 570.1ZM676.2 583.9L690.6 590.2L690.1 591.4L696.4 591.6L692 587.1L691.4 588.3L677 582ZM680 595.9L694.5 601.6L694 602.8L700.2 602.8L695.7 598.6L695.2 599.7L680.8 594ZM683.5 608L697.9 613.2L697.5 614.4L703.6 614.2L699 610.1L698.6 611.3L684.2 606.1ZM686.6 620.2L701 624.8L700.6 626L706.6 625.6L702 621.8L701.6 622.9L687.2 618.3ZM689.3 632.5L703.7 636.5L703.3 637.7L709.2 637.1L704.5 633.5L704.2 634.7L689.9 630.6ZM691.6 644.9L705.9 648.3L705.6 649.5L711.4 648.6L706.6 645.3L706.4 646.4L692.1 643ZM693.5 657.4L707.8 660.1L707.6 661.3L713.2 660.2L708.4 657.1L708.1 658.2L693.9 655.5ZM695 669.9L709.3 671.9L709.1 673.1L714.7 671.8L709.7 668.9L709.5 670.1L695.3 668ZM696.1 682.5L710.3 683.8L710.2 685L715.7 683.4L710.6 680.8L710.5 681.9L696.3 680.6ZM696.8 695L711 695.7L710.9 696.8L716.3 695L711.1 692.7L711.1 693.8L696.8 693.2ZM697 707.6L711.2 707.6L711.2 708.8L716.5 706.7L711.2 704.6L711.2 705.8L697 705.8ZM310.9 307.8L310.9 326.8L309.2 326.8L312 333.9L314.8 326.8L313.1 326.8L313.1 307.8ZM323.9 308L324.2 326.9L322.5 326.9L325.3 333.9L328 326.9L326.4 326.9L326.2 308ZM337 308.6L337.4 327.4L335.8 327.5L338.7 334.3L341.3 327.3L339.6 327.4L339.2 308.6ZM350 309.7L350.7 328.3L349.1 328.4L352.1 335.2L354.5 328.2L352.9 328.2L352.2 309.6ZM363 311.1L364 329.6L362.4 329.7L365.4 336.4L367.7 329.4L366.1 329.5L365.2 311ZM375.9 313L377.2 331.3L375.6 331.4L378.7 338L380.9 331.1L379.3 331.2L378.1 312.8ZM388.8 315.2L390.4 333.4L388.8 333.5L392 340L394.1 333.1L392.5 333.2L390.9 315ZM401.6 317.9L403.5 335.9L401.9 336L405.2 342.4L407.2 335.5L405.6 335.7L403.7 317.7ZM414.4 320.9L416.6 338.7L415 338.9L418.4 345.2L420.2 338.3L418.6 338.5L416.4 320.7ZM427 324.4L429.6 342L428 342.2L431.5 348.4L433.1 341.5L431.6 341.7L429 324.1ZM439.5 328.2L442.5 345.6L440.9 345.9L444.6 351.9L446 345L444.5 345.3L441.5 327.9ZM451.9 332.5L455.3 349.6L453.8 349.9L457.5 355.8L458.8 348.9L457.3 349.2L453.9 332.1ZM464.2 337.1L468 354L466.5 354.3L470.4 360L471.5 353.2L470 353.5L466.2 336.6ZM476.4 342.1L480.7 358.7L479.2 359.1L483.2 364.6L484 357.8L482.6 358.2L478.3 341.6ZM488.4 347.4L493.2 363.8L491.7 364.2L495.9 369.5L496.5 362.8L495 363.2L490.2 346.9ZM500.2 353.2L505.6 369.2L504.1 369.6L508.5 374.8L508.8 368.1L507.4 368.6L502 352.6ZM511.9 359.3L517.8 374.9L516.4 375.5L520.9 380.4L521 373.7L519.6 374.2L513.7 358.6ZM523.4 365.7L529.9 381L528.6 381.6L533.2 386.3L533 379.7L531.7 380.3L525.1 365ZM534.7 372.5L541.8 387.4L540.5 388.1L545.3 392.5L544.9 386L543.5 386.6L536.4 371.7ZM545.8 379.7L553.6 394.1L552.3 394.8L557.3 399L556.5 392.6L555.2 393.3L547.5 378.8ZM556.8 387.1L565.2 401.2L563.9 401.9L569.1 405.9L568 399.5L566.8 400.2L558.4 386.2ZM567.5 394.9L576.5 408.5L575.3 409.3L580.6 413L579.3 406.7L578 407.5L569 393.9ZM578 403.1L587.6 416.1L586.4 417L591.9 420.4L590.3 414.2L589.1 415L579.5 402ZM588.3 411.5L598.5 424L597.4 424.9L602.9 428.1L601 422L599.9 422.9L589.7 410.3ZM598.4 420.2L609.1 432.2L608 433.2L613.7 436.1L611.5 430.1L610.4 431L599.8 419ZM607.1 430.3L618.4 441.9L617.3 442.9L623.2 445.5L620.7 439.6L619.7 440.6L608.4 429ZM615.6 440.6L627.3 451.7L626.3 452.8L632.3 455.2L629.5 449.3L628.5 450.4L616.8 439.3ZM623.7 451.1L635.9 461.8L634.9 462.8L641 465L638 459.3L637.1 460.4L624.9 449.7ZM631.5 461.8L644 472L643.1 473.1L649.3 475L646.1 469.5L645.2 470.6L632.6 460.4ZM638.9 472.8L651.8 482.4L651 483.6L657.2 485.3L653.8 479.8L652.9 481L640 471.3ZM646 483.9L659.2 493.1L658.4 494.3L664.7 495.7L661.1 490.4L660.3 491.6L647.1 482.4ZM652.8 495.2L666.3 503.9L665.5 505.1L671.7 506.4L668 501.2L667.3 502.4L653.8 493.7ZM659.3 506.7L672.9 514.9L672.2 516.1L678.4 517.2L674.6 512.1L673.9 513.4L660.2 505.1ZM665.4 518.4L679.2 526.1L678.5 527.3L684.7 528.2L680.7 523.3L680 524.5L666.3 516.8ZM671.1 530.2L685 537.5L684.4 538.7L690.6 539.3L686.5 534.6L685.8 535.9L672 528.6ZM676.5 542.2L690.5 549L689.9 550.2L696 550.7L691.8 546.1L691.2 547.4L677.3 540.6ZM681.5 554.3L695.5 560.6L695 561.9L701.1 562.2L696.8 557.8L696.2 559L682.2 552.7ZM686.1 566.6L700.2 572.4L699.7 573.7L705.7 573.8L701.4 569.6L700.9 570.8L686.8 565ZM690.3 579L704.4 584.4L704 585.6L710 585.5L705.5 581.5L705.1 582.7L691 577.3ZM694.2 591.5L708.3 596.4L707.9 597.7L713.8 597.4L709.3 593.5L708.9 594.8L694.8 589.9ZM697.6 604.1L711.8 608.6L711.4 609.8L717.3 609.4L712.7 605.7L712.3 606.9L698.2 602.5ZM700.7 616.8L714.8 620.8L714.5 622L720.3 621.4L715.6 617.9L715.3 619.1L701.2 615.2ZM703.4 629.6L717.5 633.1L717.2 634.3L722.9 633.5L718.2 630.2L717.9 631.4L703.8 628ZM705.6 642.5L719.8 645.4L719.5 646.7L725.2 645.7L720.4 642.5L720.1 643.8L706 640.9ZM707.5 655.4L721.6 657.8L721.4 659L727 657.8L722.1 654.9L721.9 656.1L707.8 653.8ZM709 668.4L723.1 670.2L722.9 671.4L728.4 670L723.4 667.3L723.3 668.5L709.2 666.8ZM710 681.4L724.1 682.6L724 683.8L729.4 682.2L724.4 679.7L724.3 680.9L710.2 679.8ZM710.7 694.5L724.8 695L724.7 696.3L730.1 694.4L724.9 692.1L724.9 693.4L710.7 692.8ZM710.9 707.5L725 707.5L725 708.8L730.3 706.7L725 704.6L725 705.9L710.9 705.9ZM311 293.8L311 312.7L309.3 312.7L312 319.6L314.7 312.7L313 312.7L313 293.8ZM324.5 294L324.7 312.7L323 312.8L325.7 319.7L328.4 312.7L326.7 312.7L326.5 294ZM338 294.6L338.4 313.2L336.7 313.3L339.5 320.1L342 313.2L340.3 313.2L340 294.6ZM351.5 295.7L352 314.1L350.3 314.1L353.2 320.9L355.7 314L354 314L353.5 295.6ZM365 297.1L365.7 315.4L364 315.4L367 322.1L369.3 315.2L367.7 315.3L366.9 297ZM378.4 298.9L379.3 317L377.7 317.1L380.7 323.7L382.9 316.8L381.3 316.9L380.3 298.8ZM391.7 301.1L392.9 319.1L391.3 319.2L394.4 325.6L396.5 318.8L394.9 318.9L393.6 301ZM405 303.8L406.5 321.5L404.9 321.6L408 328L410 321.2L408.4 321.3L406.9 303.6ZM418.3 306.8L420 324.3L418.4 324.5L421.6 330.7L423.5 324L421.9 324.1L420.1 306.6ZM431.4 310.2L433.4 327.5L431.8 327.7L435.1 333.8L436.9 327.1L435.3 327.3L433.2 310ZM444.4 314L446.8 331L445.2 331.3L448.6 337.2L450.2 330.6L448.6 330.8L446.2 313.8ZM457.4 318.2L460.1 335L458.5 335.2L462 341L463.4 334.4L461.9 334.7L459.2 317.9ZM470.2 322.8L473.3 339.2L471.8 339.5L475.3 345.2L476.6 338.6L475.1 338.9L472 322.4ZM483 327.7L486.5 343.9L485 344.2L488.6 349.7L489.7 343.2L488.2 343.5L484.6 327.3ZM495.6 333L499.5 348.8L498 349.2L501.8 354.5L502.7 348L501.2 348.4L497.2 332.6ZM508 338.7L512.5 354.1L511 354.6L514.9 359.6L515.5 353.3L514.1 353.7L509.6 338.2ZM520.3 344.7L525.3 359.8L523.9 360.3L528 365.1L528.3 358.8L526.9 359.3L521.9 344.2ZM532.5 351.1L538.1 365.8L536.7 366.3L540.9 370.9L541 364.7L539.6 365.2L534 350.6ZM544.6 357.9L550.7 372.1L549.3 372.6L553.7 377L553.5 370.8L552.1 371.4L546 357.2ZM556.4 365L563.1 378.7L561.8 379.3L566.3 383.4L565.9 377.3L564.5 378L557.8 364.3ZM568.2 372.4L575.5 385.6L574.2 386.3L578.8 390.1L578.1 384.1L576.8 384.8L569.5 371.6ZM579.7 380.1L587.6 392.8L586.4 393.5L591.2 397.1L590.1 391.2L588.9 392L581 379.3ZM591.2 388.1L599.6 400.3L598.5 401.1L603.4 404.3L602 398.6L600.9 399.4L592.4 387.3ZM602.4 396.5L611.5 408.1L610.3 408.9L615.4 411.9L613.7 406.3L612.6 407.2L603.6 395.6ZM613.5 405.1L623.1 416.1L622 417.1L627.2 419.7L625.3 414.2L624.2 415.2L614.6 404.1ZM622.2 416.2L632.4 426.8L631.4 427.8L636.7 430.2L634.5 424.8L633.4 425.8L623.2 415.2ZM630.5 427.5L641.3 437.6L640.3 438.6L645.8 440.8L643.3 435.4L642.3 436.5L631.5 426.4ZM638.5 438.9L649.8 448.5L648.9 449.6L654.5 451.5L651.7 446.3L650.8 447.4L639.5 437.8ZM646.2 450.5L658 459.6L657.1 460.8L662.8 462.4L659.8 457.3L659 458.4L647.2 449.3ZM653.6 462.2L665.8 470.9L665 472L670.8 473.5L667.5 468.5L666.7 469.6L654.5 460.9ZM660.7 474.1L673.2 482.3L672.5 483.5L678.3 484.7L674.9 479.8L674.1 481L661.6 472.8ZM667.4 486.1L680.3 493.8L679.5 495.1L685.4 496.1L681.8 491.3L681.1 492.5L668.2 484.8ZM673.8 498.3L686.9 505.6L686.2 506.8L692.1 507.6L688.4 503L687.7 504.2L674.6 496.9ZM679.9 510.6L693.1 517.4L692.5 518.7L698.4 519.3L694.5 514.8L693.9 516L680.6 509.2ZM685.5 523L699 529.4L698.4 530.7L704.3 531.1L700.3 526.8L699.7 528L686.2 521.6ZM690.9 535.6L704.4 541.6L703.9 542.9L709.8 543.1L705.6 538.9L705.1 540.2L691.5 534.2ZM695.8 548.3L709.5 553.9L709 555.2L714.9 555.2L710.6 551.1L710.1 552.4L696.4 546.9ZM700.4 561.1L714.2 566.3L713.7 567.6L719.5 567.4L715.2 563.5L714.7 564.8L700.9 559.7ZM704.6 574.1L718.4 578.8L718 580.1L723.8 579.8L719.4 576L718.9 577.3L705.1 572.6ZM708.4 587.1L722.3 591.4L721.9 592.7L727.6 592.3L723.1 588.6L722.7 590L708.8 585.7ZM711.8 600.3L725.7 604.1L725.4 605.5L731.1 604.8L726.5 601.3L726.1 602.7L712.2 598.8ZM714.8 613.5L728.8 616.9L728.5 618.2L734.1 617.5L729.5 614.1L729.2 615.4L715.2 612ZM717.5 626.8L731.4 629.8L731.2 631.1L736.8 630.1L732.1 627L731.8 628.3L717.8 625.3ZM719.7 640.1L733.7 642.7L733.5 644L739 642.9L734.2 639.9L734 641.2L720 638.6ZM721.6 653.5L735.6 655.6L735.4 656.9L740.9 655.6L736 652.8L735.8 654.1L721.8 652ZM723 667L737 668.5L736.9 669.8L742.3 668.3L737.3 665.7L737.2 667L723.2 665.5ZM724 680.4L738.1 681.5L738 682.8L743.3 681.1L738.3 678.6L738.2 680L724.1 678.9ZM724.7 693.9L738.7 694.4L738.7 695.8L743.9 693.9L738.8 691.6L738.8 692.9L724.7 692.4ZM724.9 707.5L739 707.5L739 708.8L744.2 706.7L739 704.6L739 705.9L724.9 705.9ZM311.1 278.5L311.1 297.2L309.3 297.2L312 304.1L314.7 297.2L312.9 297.2L312.9 278.5ZM325.1 278.7L325.2 297.3L323.4 297.3L326.2 304.1L328.8 297.2L327.1 297.3L326.9 278.7ZM339.1 279.3L339.4 297.7L337.6 297.8L340.4 304.5L342.9 297.7L341.2 297.7L340.9 279.3ZM353.1 280.3L353.5 298.6L351.8 298.6L354.6 305.3L357.1 298.5L355.3 298.5L354.9 280.3ZM367.1 281.7L367.7 299.8L365.9 299.9L368.8 306.5L371.2 299.7L369.4 299.8L368.8 281.7ZM381 283.5L381.8 301.5L380 301.5L382.9 308L385.2 301.3L383.5 301.4L382.8 283.5ZM394.9 285.7L395.8 303.5L394.1 303.6L397.1 310L399.3 303.3L397.6 303.4L396.6 285.7ZM408.7 288.3L409.9 305.8L408.2 306L411.2 312.3L413.3 305.6L411.6 305.7L410.4 288.2ZM422.5 291.3L423.9 308.6L422.2 308.7L425.2 314.9L427.2 308.3L425.6 308.5L424.2 291.2ZM436.2 294.7L437.8 311.7L436.2 311.9L439.3 317.9L441.1 311.4L439.5 311.6L437.8 294.6ZM449.8 298.5L451.7 315.2L450.1 315.4L453.2 321.3L455 314.8L453.3 315L451.4 298.3ZM463.3 302.6L465.5 319L464 319.3L467.2 325L468.7 318.6L467.1 318.8L464.9 302.4ZM476.8 307.1L479.3 323.2L477.8 323.5L481.1 329.1L482.5 322.7L480.9 323L478.3 306.9ZM490.1 312L493 327.8L491.5 328.1L494.9 333.5L496.1 327.2L494.6 327.5L491.6 311.8ZM503.4 317.3L506.7 332.7L505.2 333L508.7 338.2L509.7 332L508.2 332.4L504.9 317ZM516.5 322.9L520.3 337.9L518.8 338.3L522.4 343.3L523.2 337.2L521.7 337.5L517.9 322.6ZM529.5 328.9L533.8 343.4L532.3 343.9L536 348.6L536.6 342.6L535.2 343L530.9 328.5ZM542.5 335.2L547.2 349.3L545.8 349.8L549.6 354.3L550 348.4L548.6 348.9L543.8 334.8ZM555.3 341.9L560.6 355.5L559.2 356L563.2 360.3L563.2 354.5L561.9 355L556.6 341.4ZM568 348.9L573.8 362L572.5 362.6L576.6 366.6L576.4 360.9L575.1 361.4L569.2 348.4ZM580.6 356.2L587 368.8L585.7 369.4L589.9 373.1L589.4 367.5L588.2 368.2L581.7 355.6ZM593.1 363.9L600 375.9L598.8 376.6L603.2 380L602.4 374.5L601.2 375.2L594.2 363.2ZM605.4 371.8L613 383.3L611.9 384L616.3 387.1L615.2 381.8L614.1 382.6L606.5 371.1ZM617.7 380.1L625.9 390.9L624.8 391.8L629.4 394.6L628 389.4L626.9 390.2L618.8 379.3ZM630 388.6L638.7 398.9L637.6 399.8L642.3 402.3L640.6 397.2L639.6 398.1L630.9 387.8ZM638.5 400.9L647.9 410.6L646.9 411.6L651.8 413.8L649.8 408.8L648.8 409.8L639.4 400ZM646.8 413.2L656.8 422.5L655.8 423.5L660.9 425.5L658.6 420.5L657.6 421.6L647.6 412.3ZM654.7 425.6L665.3 434.4L664.4 435.5L669.6 437.2L667 432.4L666.1 433.4L655.6 424.6ZM662.4 438.1L673.5 446.4L672.6 447.5L678 449L675.1 444.3L674.3 445.4L663.2 437ZM669.7 450.7L681.3 458.6L680.5 459.7L685.9 460.9L682.8 456.3L682 457.5L670.4 449.6ZM676.7 463.3L688.7 470.8L687.9 472L693.4 473L690.1 468.5L689.4 469.7L677.4 462.2ZM683.4 476.2L695.7 483.2L695 484.4L700.6 485.2L697 480.8L696.3 482L684 475ZM689.7 489.1L702.3 495.6L701.6 496.9L707.3 497.5L703.6 493.2L702.9 494.4L690.3 487.9ZM695.7 502.1L708.5 508.2L707.9 509.5L713.6 509.9L709.7 505.7L709.1 507L696.3 500.9ZM701.3 515.2L714.4 520.9L713.8 522.2L719.5 522.4L715.5 518.4L714.9 519.7L701.8 514ZM706.5 528.5L719.8 533.8L719.3 535.1L724.9 535.1L720.8 531.2L720.3 532.5L707.1 527.2ZM711.4 541.8L724.8 546.7L724.3 548L730 547.9L725.8 544.1L725.3 545.4L711.9 540.5ZM716 555.2L729.5 559.8L729 561.1L734.7 560.8L730.4 557.1L729.9 558.5L716.4 553.9ZM720.1 568.8L733.7 572.9L733.3 574.3L739 573.8L734.5 570.3L734.1 571.6L720.5 567.4ZM723.9 582.4L737.6 586.2L737.2 587.5L742.8 586.9L738.3 583.5L737.9 584.8L724.3 581ZM727.3 596.1L741 599.5L740.7 600.8L746.3 600.1L741.7 596.8L741.3 598.1L727.6 594.7ZM730.3 609.8L744.1 612.9L743.8 614.2L749.3 613.3L744.7 610.2L744.4 611.5L730.6 608.5ZM732.9 623.6L746.7 626.3L746.4 627.7L751.9 626.6L747.2 623.6L747 624.9L733.1 622.3ZM735.1 637.5L748.9 639.8L748.7 641.1L754.2 639.9L749.4 637L749.2 638.4L735.3 636.1ZM736.9 651.4L750.8 653.3L750.6 654.6L756 653.3L751.2 650.5L751 651.9L737.1 650.1ZM738.3 665.4L752.2 666.8L752.1 668.1L757.5 666.6L752.5 664L752.4 665.4L738.5 664ZM739.4 679.4L753.3 680.3L753.2 681.7L758.5 679.9L753.5 677.5L753.4 678.9L739.4 678ZM740 693.4L753.9 693.8L753.9 695.2L759.1 693.3L754 691.1L754 692.4L740 692ZM740.2 707.4L754.2 707.4L754.2 708.8L759.3 706.7L754.2 704.6L754.2 706L740.2 706ZM311.1 262.2L311.1 280.7L309.3 280.7L312 287.6L314.7 280.7L312.9 280.7L312.9 262.2ZM325.7 262.4L325.8 280.8L324 280.8L326.7 287.6L329.3 280.8L327.5 280.8L327.4 262.4ZM340.2 263L340.4 281.2L338.6 281.3L341.4 288L343.9 281.2L342.1 281.2L341.9 263ZM354.8 264L355.1 282.1L353.3 282.1L356.1 288.7L358.6 282L356.8 282L356.4 264ZM369.3 265.4L369.7 283.3L368 283.3L370.8 289.9L373.2 283.2L371.4 283.2L370.9 265.4ZM383.7 267.2L384.4 284.9L382.6 284.9L385.4 291.4L387.8 284.8L386 284.8L385.4 267.1ZM398.2 269.4L399 286.9L397.2 286.9L400.1 293.3L402.3 286.7L400.6 286.8L399.8 269.3ZM412.6 271.9L413.5 289.2L411.8 289.3L414.7 295.5L416.9 289L415.1 289.1L414.2 271.8ZM426.9 274.9L428.1 291.9L426.4 292L429.3 298.1L431.3 291.7L429.7 291.8L428.5 274.8ZM441.2 278.2L442.6 295L440.9 295.1L443.9 301.1L445.8 294.7L444.1 294.8L442.8 278.1ZM455.4 282L457 298.4L455.4 298.5L458.4 304.4L460.2 298.1L458.6 298.2L457 281.8ZM469.6 286.1L471.5 302.2L469.8 302.4L472.9 308L474.6 301.8L472.9 302L471.1 285.9ZM483.7 290.5L485.8 306.3L484.3 306.5L487.4 312L488.9 305.9L487.3 306.1L485.1 290.3ZM497.7 295.4L500.2 310.8L498.6 311L501.8 316.3L503.1 310.3L501.6 310.5L499.1 295.1ZM511.7 300.6L514.5 315.6L513 315.8L516.2 321L517.4 315L515.9 315.3L513 300.3ZM525.5 306.1L528.7 320.7L527.3 321L530.6 325.9L531.5 320.1L530.1 320.4L526.8 305.8ZM539.3 312L543 326.1L541.5 326.5L544.9 331.2L545.7 325.4L544.2 325.8L540.6 311.7ZM553 318.3L557.1 331.9L555.7 332.3L559.3 336.8L559.8 331.1L558.4 331.5L554.2 317.9ZM566.7 324.9L571.3 338L569.9 338.5L573.6 342.6L573.8 337.1L572.4 337.6L567.8 324.5ZM580.2 331.8L585.4 344.4L584.1 344.9L587.8 348.8L587.8 343.4L586.5 343.9L581.4 331.4ZM593.7 339.1L599.4 351.1L598.2 351.7L602 355.2L601.7 350L600.5 350.6L594.8 338.6ZM607.2 346.6L613.4 358L612.2 358.7L616.2 362L615.6 356.8L614.4 357.5L608.2 346.1ZM620.6 354.5L627.4 365.3L626.3 366L630.4 369L629.5 364L628.4 364.7L621.6 353.9ZM634.1 362.7L641.4 372.9L640.3 373.6L644.5 376.3L643.3 371.4L642.3 372.2L634.9 362ZM647.5 371.2L655.3 380.7L654.3 381.5L658.7 383.9L657.2 379.2L656.2 380L648.3 370.5ZM655.9 384.6L664.5 393.6L663.6 394.5L668.1 396.6L666.3 392L665.3 392.9L656.7 383.8ZM664.1 398L673.4 406.6L672.5 407.6L677.2 409.4L675 404.8L674.1 405.8L664.9 397.2ZM672 411.4L681.9 419.6L681 420.6L685.9 422.1L683.4 417.7L682.6 418.7L672.7 410.5ZM679.5 424.9L690 432.6L689.2 433.7L694.2 435L691.5 430.6L690.7 431.6L680.2 424ZM686.8 438.4L697.8 445.6L697 446.8L702.2 447.8L699.2 443.5L698.4 444.7L687.4 437.4ZM693.7 452L705.2 458.8L704.5 459.9L709.7 460.8L706.5 456.5L705.8 457.7L694.3 450.9ZM700.3 465.6L712.2 472L711.5 473.2L716.8 473.8L713.4 469.7L712.7 470.9L700.9 464.5ZM706.6 479.3L718.8 485.2L718.1 486.5L723.5 486.9L719.9 482.9L719.3 484.1L707.1 478.2ZM712.5 493.1L725 498.6L724.4 499.9L729.8 500.1L726 496.2L725.5 497.5L713 491.9ZM718 506.9L730.8 512.1L730.2 513.4L735.7 513.4L731.8 509.6L731.2 510.9L718.5 505.8ZM723.2 520.9L736.2 525.6L735.7 527L741.2 526.8L737.1 523.1L736.6 524.5L723.7 519.7ZM728.1 534.9L741.2 539.3L740.8 540.6L746.3 540.3L742.1 536.7L741.6 538.1L728.5 533.7ZM732.5 549L745.8 553L745.4 554.4L750.9 553.9L746.6 550.4L746.2 551.8L732.9 547.7ZM736.6 563.1L750 566.8L749.7 568.2L755.2 567.6L750.8 564.2L750.4 565.6L737 561.9ZM740.4 577.3L753.9 580.7L753.5 582.1L759 581.3L754.5 578.1L754.2 579.5L740.7 576.1ZM743.7 591.6L757.3 594.7L757 596L762.5 595.1L757.9 592L757.6 593.4L744 590.4ZM746.7 605.9L760.3 608.7L760.1 610L765.5 609L760.9 606L760.6 607.4L746.9 604.7ZM749.3 620.3L763 622.7L762.7 624.1L768.1 622.9L763.4 620L763.2 621.4L749.5 619.1ZM751.5 634.8L765.2 636.8L765 638.2L770.4 636.9L765.6 634.1L765.4 635.5L751.6 633.5ZM753.3 649.2L767 650.9L766.9 652.3L772.2 650.8L767.3 648.2L767.2 649.6L753.4 648ZM754.7 663.7L768.5 665L768.3 666.4L773.6 664.8L768.7 662.3L768.6 663.7L754.8 662.5ZM755.7 678.3L769.5 679.1L769.4 680.5L774.7 678.7L769.7 676.4L769.6 677.8L755.7 677ZM756.3 692.8L770.1 693.2L770.1 694.6L775.3 692.7L770.2 690.5L770.2 691.9L756.3 691.5ZM756.5 707.3L770.4 707.3L770.4 708.8L775.5 706.7L770.4 704.6L770.4 706.1L756.5 706.1ZM311.2 245L311.2 263.3L309.3 263.3L312 270.1L314.7 263.3L312.8 263.3L312.8 245ZM326.3 245.2L326.4 263.4L324.5 263.4L327.2 270.1L329.8 263.4L328 263.4L327.9 245.2ZM341.4 245.8L341.6 263.8L339.8 263.9L342.4 270.5L345 263.8L343.2 263.8L343 245.8ZM356.5 246.8L356.8 264.7L355 264.7L357.7 271.3L360.2 264.6L358.4 264.6L358.1 246.8ZM371.6 248.2L372 265.9L370.2 265.9L372.9 272.4L375.3 265.8L373.6 265.8L373.2 248.1ZM386.6 249.9L387.2 267.4L385.4 267.5L388.1 273.9L390.5 267.3L388.7 267.4L388.2 249.9ZM401.7 252.1L402.3 269.4L400.6 269.4L403.3 275.7L405.6 269.2L403.9 269.3L403.2 252ZM416.7 254.6L417.5 271.6L415.7 271.7L418.5 277.9L420.7 271.5L419 271.6L418.2 254.5ZM431.6 257.5L432.6 274.3L430.9 274.4L433.7 280.5L435.8 274.1L434.1 274.2L433.1 257.5ZM446.5 260.8L447.7 277.3L446 277.4L448.8 283.4L450.8 277.1L449.1 277.2L448 260.7ZM461.4 264.5L462.7 280.7L461.1 280.8L463.9 286.6L465.8 280.4L464.2 280.6L462.8 264.4ZM476.2 268.6L477.8 284.4L476.2 284.6L479.1 290.2L480.8 284.1L479.2 284.3L477.6 268.4ZM491 273L492.8 288.4L491.2 288.6L494.2 294.1L495.8 288.1L494.2 288.3L492.4 272.8ZM505.7 277.8L507.8 292.8L506.3 293L509.3 298.3L510.7 292.4L509.1 292.6L507 277.6ZM520.4 282.9L522.8 297.5L521.3 297.8L524.3 302.8L525.6 297.1L524.1 297.3L521.7 282.7ZM535 288.4L537.8 302.6L536.3 302.9L539.4 307.7L540.5 302.1L539 302.3L536.3 288.2ZM549.6 294.3L552.7 307.9L551.3 308.3L554.5 312.9L555.4 307.3L553.9 307.7L550.8 294ZM564.1 300.5L567.7 313.6L566.3 314L569.6 318.3L570.2 312.9L568.9 313.3L565.3 300.1ZM578.7 307L582.7 319.6L581.4 320L584.7 324.1L585.1 318.8L583.8 319.2L579.7 306.6ZM593.1 313.8L597.6 325.9L596.4 326.3L599.8 330.1L600 325L598.7 325.5L594.2 313.4ZM607.6 321L612.6 332.4L611.4 333L615 336.5L614.8 331.5L613.6 332L608.6 320.6ZM622.1 328.5L627.6 339.3L626.5 339.9L630.2 343.1L629.7 338.2L628.6 338.8L623.1 328ZM636.7 336.3L642.7 346.4L641.6 347.1L645.4 350L644.7 345.3L643.6 345.9L637.5 335.7ZM651.2 344.3L657.8 353.9L656.8 354.6L660.6 357.1L659.6 352.6L658.6 353.3L652.1 343.8ZM665.9 352.7L673 361.6L672.1 362.3L676 364.5L674.7 360.2L673.8 361L666.7 352.1ZM674.3 367.4L682.1 375.8L681.2 376.6L685.4 378.6L683.7 374.3L682.9 375.1L675 366.7ZM682.4 382L690.9 389.9L690.1 390.9L694.4 392.5L692.5 388.3L691.6 389.2L683 381.2ZM690.1 396.5L699.4 404L698.6 405L703.1 406.4L700.8 402.2L700 403.2L690.8 395.7ZM697.6 411L707.5 418.1L706.8 419.1L711.5 420.3L708.9 416.2L708.1 417.2L698.2 410.1ZM704.8 425.5L715.2 432.1L714.5 433.2L719.4 434.1L716.5 430.1L715.8 431.2L705.4 424.6ZM711.6 440L722.6 446.2L721.9 447.3L726.9 448L723.8 444.1L723.1 445.2L712.2 439ZM718.1 454.5L729.6 460.3L729 461.5L734 461.9L730.7 458.1L730.1 459.3L718.7 453.5ZM724.3 469L736.1 474.4L735.6 475.7L740.7 475.9L737.2 472.1L736.6 473.4L724.8 468ZM730.2 483.6L742.3 488.6L741.8 489.9L747 489.9L743.3 486.3L742.8 487.5L730.6 482.5ZM735.7 498.2L748.1 502.9L747.6 504.1L752.9 504L749 500.5L748.5 501.8L736.1 497.1ZM740.8 512.9L753.5 517.2L753.1 518.5L758.4 518.2L754.3 514.7L753.9 516L741.2 511.8ZM745.6 527.6L758.5 531.5L758.1 532.9L763.4 532.4L759.3 529.1L758.8 530.4L746 526.5ZM750 542.4L763.1 546L762.7 547.3L768.1 546.7L763.8 543.5L763.4 544.8L750.4 541.2ZM754.1 557.2L767.3 560.5L766.9 561.8L772.3 561.1L767.9 557.9L767.6 559.3L754.4 556ZM757.8 572L771.1 575L770.8 576.4L776.1 575.5L771.7 572.5L771.4 573.8L758 570.8ZM761.1 586.9L774.5 589.6L774.2 591L779.6 590L775 587.1L774.7 588.4L761.3 585.7ZM764 601.9L777.5 604.3L777.3 605.7L782.6 604.6L778 601.7L777.7 603.1L764.2 600.7ZM766.6 616.9L780.1 619L779.9 620.4L785.2 619.2L780.5 616.4L780.3 617.8L766.7 615.7ZM768.7 631.9L782.3 633.7L782.2 635.1L787.5 633.7L782.7 631.1L782.5 632.5L768.9 630.7ZM770.5 646.9L784.2 648.4L784 649.8L789.3 648.3L784.4 645.8L784.3 647.2L770.6 645.7ZM771.9 662L785.6 663.1L785.5 664.5L790.7 662.9L785.8 660.5L785.7 661.9L772 660.8ZM772.9 677.1L786.6 677.8L786.5 679.3L791.7 677.5L786.8 675.2L786.7 676.6L772.9 675.9ZM773.5 692.2L787.2 692.6L787.2 694L792.3 692.1L787.3 689.9L787.3 691.3L773.5 691ZM773.7 707.3L787.5 707.3L787.5 708.7L792.6 706.7L787.5 704.7L787.5 706.1L773.7 706.1ZM311.2 227.3L311.2 245.5L309.4 245.5L312 252.2L314.6 245.5L312.8 245.5L312.8 227.3ZM326.9 227.5L327 245.5L325.1 245.5L327.8 252.2L330.4 245.5L328.5 245.5L328.5 227.5ZM342.6 228.1L342.7 246L340.9 246L343.5 252.6L346.1 245.9L344.3 245.9L344.1 228.1ZM358.3 229.1L358.5 246.8L356.7 246.8L359.3 253.3L361.8 246.7L360 246.7L359.8 229ZM373.9 230.4L374.2 247.9L372.5 248L375.1 254.4L377.5 247.9L375.8 247.9L375.5 230.4ZM389.6 232.2L390 249.5L388.2 249.5L390.9 255.8L393.3 249.4L391.5 249.4L391.1 232.1ZM405.2 234.3L405.8 251.4L404 251.4L406.7 257.6L409 251.3L407.2 251.3L406.7 234.2ZM420.8 236.8L421.5 253.6L419.8 253.7L422.5 259.8L424.7 253.5L423 253.6L422.3 236.7ZM436.4 239.7L437.2 256.2L435.5 256.3L438.3 262.3L440.4 256.1L438.7 256.1L437.9 239.6ZM452 243L452.9 259.2L451.3 259.3L454 265.1L456 259L454.4 259.1L453.4 242.9ZM467.5 246.6L468.7 262.5L467 262.6L469.8 268.3L471.7 262.3L470 262.4L468.9 246.5ZM483 250.6L484.3 266.1L482.7 266.3L485.5 271.8L487.3 265.9L485.7 266L484.4 250.5ZM498.5 255L500 270.1L498.5 270.3L501.3 275.6L502.9 269.8L501.3 270L499.8 254.8ZM513.9 259.7L515.7 274.4L514.2 274.6L517 279.8L518.5 274.1L517 274.3L515.2 259.5ZM529.4 264.8L531.4 279L529.9 279.3L532.8 284.2L534.2 278.6L532.7 278.9L530.6 264.6ZM544.8 270.2L547.2 284L545.7 284.2L548.6 289L549.8 283.5L548.3 283.8L546 270ZM560.2 276L562.9 289.3L561.5 289.5L564.5 294L565.4 288.7L564 289L561.3 275.7ZM575.6 282.1L578.7 294.8L577.3 295.2L580.4 299.4L581.1 294.2L579.8 294.6L576.7 281.8ZM591 288.5L594.5 300.7L593.2 301.1L596.3 305L596.8 300L595.5 300.4L592 288.2ZM606.4 295.3L610.4 306.9L609.1 307.3L612.3 311L612.6 306.1L611.3 306.5L607.4 295ZM621.9 302.4L626.3 313.3L625.1 313.8L628.4 317.2L628.4 312.5L627.2 312.9L622.8 302ZM637.5 309.8L642.3 320.1L641.2 320.6L644.6 323.6L644.3 319.1L643.2 319.6L638.4 309.4ZM653.1 317.5L658.5 327.1L657.4 327.7L660.9 330.4L660.3 326L659.3 326.6L654 317ZM668.9 325.5L674.7 334.4L673.8 335L677.3 337.4L676.5 333.2L675.6 333.8L669.7 324.9ZM684.8 333.8L691.2 342L690.3 342.6L693.9 344.7L692.8 340.7L692 341.4L685.6 333.2ZM693.1 349.7L700.2 357.5L699.4 358.3L703.2 360L701.8 356.1L701 356.8L693.8 349.1ZM701.1 365.5L709 372.9L708.2 373.7L712.2 375.2L710.4 371.3L709.7 372.1L701.8 364.8ZM708.8 381.2L717.4 388.1L716.7 389L720.9 390.2L718.8 386.4L718 387.3L709.4 380.4ZM716.2 396.7L725.5 403.2L724.8 404.2L729.2 405.2L726.8 401.4L726.1 402.4L716.8 395.9ZM723.3 412.2L733.2 418.3L732.6 419.3L737.1 420.1L734.4 416.4L733.7 417.4L723.8 411.4ZM730.1 427.6L740.5 433.3L739.9 434.4L744.7 434.9L741.6 431.3L741 432.4L730.5 426.8ZM736.5 443L747.5 448.3L746.9 449.5L751.8 449.8L748.5 446.2L747.9 447.4L737 442.1ZM742.6 458.4L754 463.3L753.5 464.5L758.5 464.7L755 461.1L754.5 462.4L743 457.5ZM748.4 473.8L760.2 478.4L759.7 479.6L764.8 479.5L761.1 476.1L760.6 477.4L748.8 472.8ZM753.8 489.2L766 493.4L765.5 494.7L770.6 494.4L766.8 491.1L766.3 492.4L754.2 488.2ZM758.9 504.7L771.3 508.5L770.9 509.8L776.1 509.4L772.1 506.1L771.7 507.4L759.3 503.6ZM763.7 520.1L776.3 523.6L775.9 525L781.1 524.4L777 521.2L776.6 522.5L764 519ZM768 535.6L780.9 538.8L780.5 540.2L785.8 539.4L781.5 536.3L781.1 537.7L768.3 534.5ZM772 551.1L785 554L784.7 555.4L790 554.5L785.6 551.5L785.3 552.9L772.3 549.9ZM775.7 566.6L788.8 569.3L788.5 570.6L793.8 569.7L789.3 566.7L789 568.1L775.9 565.4ZM778.9 582.1L792.2 584.5L791.9 585.9L797.2 584.9L792.7 582L792.4 583.4L779.2 581ZM781.8 597.7L795.2 599.9L795 601.2L800.2 600.1L795.6 597.3L795.4 598.7L782 596.6ZM784.4 613.3L797.8 615.2L797.6 616.6L802.8 615.3L798.1 612.6L797.9 614L784.5 612.1ZM786.5 628.9L800 630.5L799.8 632L805 630.5L800.3 628L800.1 629.4L786.6 627.8ZM788.2 644.6L801.8 645.9L801.7 647.3L806.9 645.8L802 643.3L801.9 644.7L788.4 643.4ZM789.6 660.2L803.2 661.2L803.1 662.7L808.3 661L803.4 658.6L803.3 660.1L789.7 659.1ZM790.6 675.9L804.2 676.6L804.2 678L809.3 676.2L804.3 674L804.3 675.4L790.7 674.7ZM791.2 691.6L804.9 691.9L804.8 693.3L809.9 691.4L804.9 689.3L804.9 690.7L791.2 690.4ZM791.4 707.3L805.1 707.3L805.1 708.7L810.1 706.7L805.1 704.7L805.1 706.1L791.4 706.1ZM311.2 209.1L311.2 227.1L309.4 227.1L312 233.8L314.6 227.1L312.8 227.1L312.8 209.1ZM327.5 209.3L327.5 227.2L325.7 227.2L328.3 233.8L330.9 227.2L329.1 227.2L329 209.3ZM343.8 209.9L343.8 227.6L342 227.6L344.6 234.1L347.2 227.6L345.4 227.6L345.3 209.9ZM360.1 210.8L360.2 228.3L358.4 228.4L360.9 234.8L363.5 228.3L361.7 228.3L361.6 210.8ZM376.4 212.2L376.5 229.5L374.7 229.5L377.3 235.9L379.8 229.5L378 229.5L377.8 212.2ZM392.6 213.9L392.8 231L391.1 231L393.6 237.3L396.1 231L394.3 231L394.1 213.9ZM408.9 216L409.2 232.9L407.4 232.9L410 239.1L412.4 232.8L410.6 232.8L410.3 216ZM425.1 218.5L425.5 235.1L423.8 235.1L426.4 241.2L428.7 235L426.9 235L426.5 218.4ZM441.4 221.3L441.9 237.6L440.2 237.7L442.8 243.6L445 237.5L443.3 237.6L442.8 221.3ZM457.6 224.6L458.3 240.5L456.6 240.6L459.2 246.4L461.3 240.4L459.6 240.5L458.9 224.5ZM473.8 228.1L474.7 243.8L473 243.9L475.7 249.5L477.6 243.6L476 243.7L475.1 228.1ZM490 232.1L491.1 247.4L489.5 247.5L492.1 253L494 247.2L492.4 247.3L491.3 232ZM506.2 236.4L507.5 251.3L506 251.4L508.6 256.7L510.3 251L508.8 251.2L507.4 236.3ZM522.4 241.1L523.9 255.5L522.4 255.7L525.1 260.8L526.7 255.2L525.1 255.4L523.6 241ZM538.6 246.1L540.4 260L538.9 260.2L541.6 265.1L543 259.7L541.5 259.9L539.8 246ZM554.8 251.5L556.9 264.9L555.4 265.1L558.2 269.8L559.4 264.5L558 264.7L555.9 251.3ZM571 257.2L573.4 270.1L572 270.3L574.8 274.7L575.9 269.6L574.5 269.9L572.1 257ZM587.3 263.2L590 275.5L588.7 275.8L591.5 279.9L592.4 275L591 275.3L588.4 263ZM603.7 269.6L606.7 281.3L605.5 281.6L608.3 285.5L608.9 280.7L607.7 281L604.6 269.3ZM620.1 276.3L623.5 287.3L622.3 287.7L625.2 291.3L625.6 286.7L624.5 287L621 276ZM636.6 283.3L640.4 293.7L639.3 294.1L642.3 297.3L642.4 292.9L641.3 293.3L637.5 282.9ZM653.2 290.6L657.5 300.3L656.5 300.7L659.5 303.7L659.4 299.4L658.4 299.9L654.1 290.2ZM670 298.2L674.7 307.2L673.8 307.7L676.9 310.3L676.5 306.2L675.6 306.7L670.9 297.7ZM687 306.1L692.2 314.4L691.3 314.9L694.5 317.2L693.9 313.3L693 313.8L687.9 305.6ZM704.3 314.3L709.9 321.8L709.2 322.4L712.4 324.3L711.5 320.7L710.7 321.2L705.1 313.7ZM712.5 331.6L718.9 338.7L718.2 339.4L721.6 341L720.3 337.4L719.6 338L713.2 330.9ZM720.4 348.6L727.6 355.3L726.9 356.1L730.6 357.4L728.9 353.9L728.3 354.6L721.1 347.9ZM728 365.4L735.9 371.7L735.3 372.6L739.2 373.7L737.2 370.1L736.6 371L728.6 364.7ZM735.3 382.1L744 388L743.4 388.9L747.5 389.7L745.2 386.3L744.5 387.1L735.9 381.3ZM742.3 398.6L751.7 404.1L751.1 405.1L755.4 405.7L752.8 402.3L752.2 403.2L742.8 397.7ZM749 415L759 420.1L758.4 421.2L762.9 421.6L760 418.2L759.4 419.2L749.5 414.1ZM755.4 431.3L765.9 436.1L765.4 437.2L770 437.4L766.8 434L766.3 435.2L755.8 430.4ZM761.4 447.6L772.4 452L772 453.2L776.7 453.2L773.3 449.9L772.8 451.1L761.8 446.6ZM767.1 463.8L778.6 467.9L778.1 469.1L783 468.9L779.4 465.7L778.9 466.9L767.5 462.9ZM772.5 480L784.3 483.8L783.9 485L788.8 484.7L785 481.5L784.6 482.8L772.8 479ZM777.5 496.2L789.7 499.7L789.3 501L794.3 500.4L790.3 497.3L789.9 498.6L777.8 495.2ZM782.2 512.4L794.6 515.6L794.3 516.9L799.3 516.2L795.2 513.2L794.9 514.5L782.5 511.4ZM786.5 528.6L799.1 531.5L798.8 532.8L803.9 532L799.7 529.1L799.4 530.4L786.8 527.5ZM790.5 544.8L803.3 547.4L803 548.8L808.1 547.8L803.8 545L803.5 546.3L790.7 543.7ZM794.1 561L807 563.4L806.8 564.7L811.9 563.7L807.5 560.9L807.2 562.3L794.3 559.9ZM797.3 577.2L810.4 579.3L810.2 580.7L815.3 579.6L810.8 576.8L810.6 578.2L797.5 576.1ZM800.2 593.4L813.4 595.3L813.2 596.7L818.3 595.5L813.7 592.8L813.5 594.2L800.3 592.3ZM802.6 609.7L815.9 611.3L815.8 612.7L820.9 611.4L816.3 608.8L816.1 610.2L802.8 608.5ZM804.8 625.9L818.1 627.3L818 628.7L823.1 627.3L818.4 624.8L818.2 626.2L804.9 624.8ZM806.5 642.2L819.9 643.3L819.8 644.7L824.9 643.2L820.1 640.8L820 642.2L806.6 641ZM807.8 658.4L821.3 659.3L821.2 660.7L826.4 659.1L821.5 656.7L821.4 658.2L807.9 657.3ZM808.8 674.7L822.3 675.3L822.3 676.7L827.4 674.9L822.4 672.7L822.4 674.1L808.9 673.6ZM809.4 691L823 691.3L822.9 692.7L828 690.8L823 688.7L823 690.1L809.4 689.8ZM809.6 707.3L823.2 707.3L823.2 708.7L828.2 706.7L823.2 704.7L823.2 706.1L809.6 706.1ZM311.3 189.5L311.3 207.3L309.4 207.3L312 213.9L314.6 207.3L312.7 207.3L312.7 189.5ZM328.2 189.7L328.1 207.4L326.3 207.4L328.9 213.9L331.5 207.4L329.6 207.4L329.7 189.7ZM345.1 190.3L345.1 207.8L343.2 207.8L345.8 214.3L348.3 207.8L346.5 207.8L346.6 190.3ZM362 191.2L362 208.5L360.2 208.5L362.7 214.9L365.2 208.5L363.4 208.5L363.5 191.2ZM379 192.5L378.9 209.7L377.2 209.6L379.6 216L382.1 209.7L380.4 209.7L380.4 192.5ZM395.9 194.2L395.9 211.1L394.1 211.1L396.6 217.4L399.1 211.1L397.3 211.1L397.3 194.2ZM412.8 196.3L412.9 212.9L411.1 212.9L413.6 219.1L416 212.9L414.3 212.9L414.2 196.3ZM429.8 198.7L429.9 215.1L428.2 215.1L430.6 221.2L432.9 215.1L431.2 215.1L431.1 198.7ZM446.7 201.6L446.9 217.6L445.2 217.6L447.7 223.6L449.9 217.6L448.2 217.6L448 201.5ZM463.6 204.7L464 220.5L462.3 220.5L464.8 226.3L466.9 220.4L465.3 220.4L464.9 204.7ZM480.6 208.3L481.1 223.6L479.5 223.7L481.9 229.3L484 223.5L482.4 223.6L481.8 208.2ZM497.5 212.2L498.2 227.1L496.6 227.2L499.1 232.7L501 227L499.5 227.1L498.8 212.1ZM514.5 216.4L515.4 231L513.9 231.1L516.4 236.3L518.1 230.8L516.6 230.9L515.7 216.4ZM531.5 221.1L532.6 235.1L531.2 235.2L533.7 240.3L535.3 234.9L533.8 235L532.7 221ZM548.5 226L549.9 239.6L548.5 239.7L551 244.5L552.5 239.3L551.1 239.4L549.6 225.9ZM565.6 231.3L567.3 244.3L565.9 244.5L568.5 249.1L569.8 244L568.4 244.2L566.7 231.2ZM582.7 236.9L584.8 249.4L583.4 249.6L586 253.9L587.1 249L585.8 249.2L583.8 236.8ZM600 242.9L602.3 254.7L601 255L603.6 259L604.5 254.3L603.3 254.5L601 242.7ZM617.3 249.2L619.9 260.4L618.7 260.6L621.4 264.4L622.1 259.8L620.9 260.1L618.3 249ZM634.7 255.8L637.7 266.3L636.6 266.6L639.3 270L639.8 265.7L638.7 266L635.7 255.5ZM652.3 262.7L655.7 272.5L654.6 272.8L657.4 276L657.6 271.8L656.6 272.2L653.3 262.4ZM670.1 269.9L673.8 279L672.9 279.4L675.7 282.1L675.7 278.2L674.8 278.6L671.1 269.5ZM688.2 277.4L692.3 285.8L691.5 286.2L694.2 288.6L694 284.9L693.2 285.3L689.1 277ZM706.5 285.2L711 292.8L710.3 293.2L713.1 295.3L712.6 291.9L711.9 292.3L707.4 284.7ZM725.3 293.3L730.1 300.1L729.5 300.6L732.4 302.3L731.6 299.1L731 299.5L726.1 292.7ZM733.3 312.1L739 318.5L738.4 319L741.5 320.5L740.4 317.3L739.7 317.8L734.1 311.4ZM741.1 330.4L747.6 336.5L747 337.1L750.3 338.3L748.9 335.1L748.3 335.7L741.8 329.7ZM748.7 348.5L755.9 354.1L755.3 354.9L758.9 355.8L757.1 352.6L756.5 353.4L749.3 347.7ZM755.9 366.3L763.9 371.6L763.4 372.4L767.1 373.1L765 370L764.4 370.8L756.4 365.5ZM762.8 383.9L771.5 388.8L771 389.7L775 390.2L772.5 387.1L772 388L763.3 383.1ZM769.4 401.4L778.8 405.9L778.3 406.9L782.5 407.2L779.7 404.1L779.2 405L769.8 400.5ZM775.7 418.7L785.7 422.9L785.3 424L789.6 424L786.5 421L786.1 422L776.1 417.8ZM781.7 435.9L792.2 439.8L791.8 440.9L796.3 440.8L793 437.8L792.6 438.9L782 435ZM787.3 453L798.3 456.6L798 457.8L802.6 457.5L799 454.5L798.7 455.7L787.6 452.1ZM792.6 470.1L804.1 473.4L803.7 474.7L808.4 474.2L804.7 471.2L804.3 472.5L792.9 469.1ZM797.6 487.1L809.4 490.2L809 491.4L813.9 490.8L810 487.9L809.6 489.2L797.8 486.1ZM802.2 504.1L814.3 506.9L814 508.2L818.9 507.4L814.8 504.6L814.5 505.9L802.4 503.1ZM806.4 521.1L818.8 523.6L818.5 524.9L823.5 524L819.3 521.3L819 522.6L806.6 520ZM810.3 538L822.9 540.3L822.7 541.7L827.7 540.7L823.4 537.9L823.1 539.3L810.5 537ZM813.9 555L826.7 557L826.4 558.4L831.5 557.3L827.1 554.6L826.8 556L814.1 553.9ZM817.1 571.9L830 573.8L829.8 575.1L834.9 573.9L830.4 571.3L830.2 572.7L817.2 570.8ZM819.9 588.8L832.9 590.5L832.8 591.9L837.8 590.5L833.3 588L833.1 589.4L820 587.7ZM822.3 605.7L835.5 607.2L835.4 608.6L840.4 607.2L835.8 604.7L835.6 606.1L822.5 604.6ZM824.4 622.6L837.7 623.9L837.5 625.3L842.6 623.8L837.9 621.4L837.8 622.8L824.5 621.5ZM826.1 639.6L839.5 640.6L839.3 642L844.4 640.4L839.6 638.1L839.5 639.5L826.2 638.4ZM827.5 656.5L840.8 657.3L840.8 658.7L845.8 657L841 654.7L840.9 656.1L827.5 655.4ZM828.4 673.4L841.8 673.9L841.8 675.4L846.8 673.6L841.9 671.4L841.9 672.8L828.5 672.3ZM829 690.3L842.5 690.6L842.4 692L847.5 690.1L842.5 688L842.5 689.5L829 689.2ZM829.2 707.3L842.7 707.3L842.7 708.7L847.7 706.7L842.7 704.7L842.7 706.1L829.2 706.1ZM311.3 169.3L311.3 187L309.4 187L312 193.5L314.6 187L312.7 187L312.7 169.3ZM328.9 169.5L328.8 187L327 187L329.5 193.5L332.1 187L330.2 187L330.3 169.5ZM346.5 170L346.3 187.4L344.5 187.4L347 193.8L349.6 187.4L347.8 187.4L347.9 170.1ZM364 171L363.9 188.1L362.1 188.1L364.5 194.5L367.1 188.2L365.3 188.1L365.5 171ZM381.7 172.3L381.4 189.2L379.7 189.2L382 195.5L384.6 189.3L382.8 189.2L383.1 172.3ZM399.3 173.9L399 190.6L397.3 190.6L399.6 196.8L402.2 190.7L400.4 190.7L400.7 174ZM416.9 176L416.7 192.4L414.9 192.4L417.3 198.5L419.7 192.5L418 192.4L418.2 176ZM434.5 178.4L434.3 194.5L432.6 194.5L434.9 200.5L437.4 194.6L435.7 194.6L435.9 178.4ZM452.2 181.2L452.1 197L450.4 197L452.7 202.9L455 197L453.4 197L453.5 181.2ZM469.8 184.3L469.8 199.8L468.2 199.8L470.5 205.5L472.8 199.8L471.1 199.8L471.1 184.3ZM487.5 187.8L487.7 202.9L486.1 202.9L488.4 208.5L490.5 202.9L488.9 202.9L488.8 187.8ZM505.2 191.7L505.6 206.3L504 206.4L506.3 211.7L508.4 206.3L506.8 206.3L506.5 191.6ZM523 195.9L523.6 210.1L522.1 210.1L524.4 215.3L526.3 210L524.8 210L524.2 195.8ZM540.8 200.4L541.6 214.1L540.2 214.2L542.5 219.1L544.2 214L542.8 214L542 200.3ZM558.7 205.3L559.8 218.5L558.4 218.6L560.7 223.3L562.3 218.3L560.9 218.4L559.8 205.2ZM576.7 210.5L578.1 223.1L576.7 223.3L579.1 227.7L580.4 222.9L579.1 223L577.8 210.4ZM594.8 216.1L596.4 228L595.1 228.2L597.5 232.4L598.7 227.7L597.4 227.9L595.8 215.9ZM613 222L614.9 233.3L613.7 233.5L616.1 237.4L617.1 232.9L615.9 233.1L614 221.8ZM631.3 228.2L633.5 238.8L632.4 239L634.9 242.6L635.6 238.4L634.5 238.6L632.3 228ZM649.9 234.7L652.4 244.6L651.4 244.8L653.8 248.1L654.4 244.1L653.3 244.3L650.8 234.4ZM668.6 241.5L671.4 250.7L670.5 250.9L673 253.9L673.3 250.1L672.4 250.4L669.6 241.2ZM687.6 248.6L690.8 257L689.9 257.3L692.4 259.9L692.5 256.4L691.7 256.7L688.5 248.3ZM707 256L710.4 263.6L709.7 264L712.2 266.3L712.1 262.9L711.4 263.2L707.9 255.6ZM726.7 263.7L730.5 270.6L729.9 270.9L732.4 272.8L732 269.7L731.4 270.1L727.5 263.2ZM746.9 271.7L751.1 277.7L750.5 278.1L753 279.7L752.5 276.8L751.9 277.2L747.7 271.1ZM754.8 291.9L759.8 297.6L759.2 298.1L762 299.4L761.1 296.5L760.5 296.9L755.6 291.3ZM762.5 311.7L768.3 317L767.8 317.5L770.7 318.6L769.4 315.7L768.9 316.3L763.2 310.9ZM770 331L776.5 336L776 336.6L779.2 337.5L777.6 334.6L777.1 335.2L770.6 330.2ZM777.1 350L784.4 354.7L783.9 355.4L787.4 356L785.4 353.2L784.9 353.9L777.6 349.2ZM783.9 368.8L792 373.2L791.6 374L795.2 374.3L792.9 371.5L792.5 372.3L784.4 367.9ZM790.4 387.3L799.2 391.4L798.8 392.3L802.7 392.4L800.1 389.6L799.6 390.5L790.8 386.4ZM796.6 405.7L806.1 409.4L805.7 410.4L809.8 410.3L806.9 407.5L806.5 408.5L797 404.8ZM802.5 423.9L812.6 427.3L812.2 428.4L816.5 428.1L813.3 425.3L812.9 426.4L802.8 422.9ZM808.1 441.9L818.7 445.1L818.4 446.2L822.7 445.8L819.3 443L819 444.1L808.4 441ZM813.3 459.9L824.4 462.8L824.1 464L828.6 463.4L824.9 460.7L824.6 461.8L813.6 458.9ZM818.2 477.8L829.7 480.4L829.4 481.7L834 480.9L830.2 478.2L829.9 479.5L818.4 476.8ZM822.8 495.6L834.6 498L834.3 499.3L839 498.4L835 495.7L834.8 497L823 494.6ZM827 513.4L839.1 515.6L838.8 516.9L843.6 515.9L839.5 513.2L839.3 514.5L827.1 512.3ZM830.8 531.1L843.2 533.1L843 534.4L847.8 533.3L843.6 530.7L843.3 532L831 530ZM834.3 548.8L846.9 550.6L846.7 551.9L851.6 550.7L847.2 548.2L847 549.5L834.5 547.7ZM837.5 566.4L850.2 568L850 569.4L855 568.1L850.5 565.6L850.3 567L837.6 565.4ZM840.2 584.1L853.1 585.5L853 586.9L858 585.5L853.4 583L853.2 584.4L840.4 583ZM842.6 601.7L855.7 602.9L855.5 604.3L860.5 602.9L855.9 600.5L855.8 601.9L842.8 600.6ZM844.7 619.3L857.8 620.4L857.7 621.8L862.7 620.2L858 617.9L857.9 619.3L844.8 618.2ZM846.4 636.9L859.6 637.8L859.5 639.2L864.5 637.6L859.7 635.3L859.7 636.7L846.5 635.8ZM847.7 654.5L861 655.2L860.9 656.6L865.9 654.9L861.1 652.6L861 654.1L847.7 653.4ZM848.6 672.1L862 672.5L861.9 674L866.9 672.1L862 670L862 671.4L848.7 671ZM849.2 689.7L862.6 689.9L862.5 691.3L867.5 689.4L862.6 687.3L862.6 688.8L849.2 688.6ZM849.4 707.3L862.8 707.3L862.8 708.7L867.8 706.7L862.8 704.7L862.8 706.1L849.4 706.1ZM311.3 148.1L311.3 165.6L309.5 165.6L312 172.1L314.5 165.6L312.7 165.6L312.7 148.1ZM329.6 148.3L329.4 165.6L327.6 165.6L330.1 172L332.7 165.6L330.9 165.6L331 148.3ZM347.9 148.8L347.6 166L345.8 166L348.2 172.3L350.8 166L349 166L349.3 148.8ZM366.2 149.7L365.8 166.7L364 166.7L366.4 173L369 166.8L367.2 166.7L367.6 149.8ZM384.5 151L384 167.8L382.3 167.7L384.6 174L387.2 167.8L385.4 167.8L385.8 151.1ZM402.8 152.7L402.3 169.2L400.6 169.1L402.8 175.3L405.4 169.3L403.7 169.2L404.2 152.7ZM421.1 154.7L420.6 170.9L418.9 170.8L421.1 176.9L423.7 171L422 170.9L422.5 154.7ZM439.5 157.1L439 173L437.4 172.9L439.5 178.9L442 173.1L440.3 173L440.8 157.1ZM457.9 159.8L457.5 175.4L455.8 175.3L458 181.1L460.4 175.4L458.8 175.4L459.2 159.8ZM476.3 162.9L476 178.1L474.4 178.1L476.5 183.7L478.9 178.1L477.3 178.1L477.6 162.9ZM494.8 166.3L494.7 181.1L493.1 181.1L495.2 186.6L497.4 181.1L495.9 181.1L496 166.3ZM513.4 170.1L513.4 184.5L511.8 184.5L514 189.8L516.1 184.5L514.6 184.5L514.5 170.1ZM532 174.3L532.2 188.1L530.7 188.1L532.9 193.2L534.8 188.1L533.3 188.1L533.1 174.2ZM550.7 178.7L551.1 192.1L549.7 192.1L551.9 197L553.7 192L552.2 192L551.8 178.7ZM569.5 183.6L570.2 196.3L568.8 196.4L571 201L572.6 196.2L571.2 196.3L570.5 183.5ZM588.4 188.7L589.4 200.8L588.1 201L590.3 205.3L591.7 200.7L590.4 200.8L589.4 188.6ZM607.4 194.2L608.7 205.7L607.5 205.8L609.7 209.8L611 205.4L609.7 205.5L608.4 194.1ZM626.6 200L628.2 210.8L627.1 210.9L629.3 214.7L630.4 210.4L629.2 210.6L627.6 199.8ZM646.1 206.1L647.9 216.1L646.9 216.3L649.1 219.8L650 215.8L648.9 216L647 205.9ZM665.7 212.5L667.8 221.8L666.9 222L669.1 225.1L669.7 221.4L668.8 221.6L666.7 212.3ZM685.7 219.2L688 227.7L687.2 228L689.4 230.7L689.8 227.2L689 227.5L686.6 219ZM705.9 226.3L708.6 233.9L707.9 234.2L710.1 236.6L710.3 233.4L709.6 233.6L706.9 225.9ZM726.6 233.6L729.6 240.4L728.9 240.7L731.1 242.8L731.1 239.8L730.5 240L727.6 233.2ZM747.8 241.2L751 247.2L750.4 247.5L752.7 249.2L752.5 246.4L751.9 246.7L748.7 240.7ZM769.5 249L773.1 254.3L772.5 254.6L774.8 255.9L774.5 253.3L773.9 253.7L770.4 248.5ZM777.4 270.8L781.6 275.7L781.1 276.2L783.6 277.2L782.9 274.6L782.4 275.1L778.2 270.1ZM785 292L790 296.6L789.5 297.1L792.2 298L791.1 295.4L790.7 295.9L785.7 291.2ZM792.3 312.7L798.1 317L797.7 317.6L800.5 318.2L799.1 315.7L798.7 316.2L792.9 311.9ZM799.3 333L805.9 337L805.6 337.6L808.6 338.1L806.8 335.6L806.5 336.2L799.9 332.1ZM806.1 352.9L813.5 356.7L813.1 357.4L816.4 357.6L814.3 355.1L813.9 355.8L806.5 352.1ZM812.5 372.6L820.6 376.1L820.3 376.9L823.9 376.9L821.4 374.4L821 375.2L812.9 371.7ZM818.6 392L827.5 395.3L827.2 396.1L830.9 396L828.1 393.4L827.8 394.3L819 391.1ZM824.4 411.2L833.9 414.2L833.6 415.2L837.6 414.8L834.5 412.3L834.2 413.3L824.7 410.3ZM829.9 430.3L840 433L839.7 434.1L843.9 433.5L840.6 431L840.3 432L830.2 429.3ZM835 449.2L845.7 451.7L845.4 452.8L849.7 452.1L846.2 449.6L845.9 450.7L835.3 448.2ZM839.9 468L851 470.2L850.7 471.4L855.2 470.6L851.4 468.1L851.2 469.3L840.1 467ZM844.4 486.6L855.8 488.7L855.6 489.9L860.2 489L856.2 486.5L856 487.7L844.5 485.7ZM848.5 505.2L860.3 507.1L860.1 508.4L864.8 507.3L860.7 504.9L860.5 506.1L848.7 504.3ZM852.3 523.8L864.4 525.5L864.2 526.8L869 525.6L864.7 523.2L864.5 524.5L852.4 522.8ZM855.7 542.2L868.1 543.8L867.9 545.1L872.7 543.8L868.4 541.4L868.2 542.8L855.9 541.2ZM858.8 560.7L871.4 562.1L871.2 563.4L876.1 562L871.6 559.7L871.5 561L858.9 559.6ZM861.6 579.1L874.3 580.3L874.2 581.7L879 580.2L874.5 577.9L874.4 579.2L861.7 578ZM864 597.4L876.8 598.5L876.7 599.9L881.6 598.4L877 596.1L876.9 597.4L864 596.4ZM866 615.8L878.9 616.7L878.8 618.1L883.8 616.5L879.1 614.2L879 615.6L866 614.7ZM867.6 634.1L880.7 634.8L880.6 636.2L885.6 634.6L880.8 632.4L880.8 633.8L867.7 633ZM868.9 652.4L882.1 653L882 654.4L887 652.6L882.2 650.5L882.1 651.9L869 651.3ZM869.8 670.7L883.1 671.1L883 672.5L888 670.7L883.1 668.6L883.1 670L869.9 669.6ZM870.4 689L883.7 689.2L883.7 690.6L888.6 688.7L883.7 686.6L883.7 688.1L870.4 687.9ZM870.6 707.3L883.9 707.3L883.9 708.7L888.8 706.7L883.9 704.7L883.9 706.1L870.6 706.1ZM311.3 125.3L311.3 142.6L309.5 142.6L312 149L314.5 142.6L312.7 142.6L312.7 125.3ZM330.3 125.5L330.1 142.6L328.3 142.6L330.8 149L333.3 142.7L331.5 142.6L331.7 125.5ZM349.4 126L349 143L347.2 142.9L349.6 149.3L352.2 143.1L350.4 143L350.8 126ZM368.4 126.9L367.9 143.7L366.1 143.6L368.4 149.9L371 143.8L369.3 143.7L369.8 126.9ZM387.5 128.2L386.8 144.7L385.1 144.6L387.3 150.8L389.9 144.8L388.2 144.8L388.8 128.2ZM406.6 129.8L405.8 146.1L404.1 146L406.3 152.1L408.9 146.2L407.2 146.1L407.9 129.8ZM425.7 131.8L424.9 147.8L423.2 147.7L425.3 153.7L427.9 147.9L426.2 147.8L427 131.8ZM444.9 134.1L444.1 149.8L442.4 149.7L444.4 155.6L447 149.9L445.4 149.8L446.1 134.2ZM464.1 136.8L463.3 152.1L461.7 152L463.7 157.8L466.2 152.2L464.6 152.2L465.3 136.9ZM483.3 139.8L482.7 154.7L481.1 154.7L483.1 160.3L485.5 154.9L483.9 154.8L484.6 139.9ZM502.7 143.2L502.2 157.7L500.6 157.6L502.6 163.1L504.9 157.8L503.4 157.7L503.9 143.3ZM522.1 147L521.8 161L520.3 160.9L522.2 166.1L524.4 161L522.9 161L523.2 147ZM541.6 151L541.5 164.5L540.1 164.5L542 169.5L544.1 164.5L542.6 164.5L542.7 151ZM561.2 155.5L561.4 168.3L560 168.4L562 173.1L563.9 168.3L562.5 168.3L562.3 155.4ZM581 160.2L581.5 172.5L580.1 172.5L582.1 177L583.8 172.4L582.5 172.4L582 160.2ZM600.9 165.3L601.7 176.9L600.4 177L602.5 181.1L603.9 176.7L602.7 176.8L601.9 165.2ZM621 170.7L622.1 181.6L620.9 181.7L623 185.5L624.2 181.4L623.1 181.5L622 170.6ZM641.3 176.4L642.7 186.5L641.7 186.7L643.7 190.2L644.7 186.2L643.7 186.4L642.3 176.2ZM661.9 182.4L663.5 191.7L662.5 191.9L664.5 195.1L665.4 191.4L664.5 191.6L662.9 182.2ZM682.8 188.7L684.5 197.2L683.7 197.4L685.7 200.3L686.4 196.9L685.5 197L683.8 188.5ZM704 195.3L706 203L705.3 203.2L707.2 205.8L707.7 202.6L707 202.8L705 195.1ZM725.7 202.2L727.9 209.1L727.2 209.3L729.2 211.5L729.5 208.6L728.8 208.8L726.6 201.9ZM747.8 209.4L750.2 215.4L749.6 215.7L751.6 217.5L751.8 214.8L751.2 215.1L748.7 209ZM770.5 216.9L773.2 222.1L772.6 222.4L774.6 223.8L774.7 221.3L774.1 221.6L771.4 216.4ZM793.9 224.6L796.8 229L796.2 229.3L798.3 230.3L798.2 228L797.6 228.4L794.8 224.1ZM801.7 248L805.2 252.2L804.7 252.6L806.9 253.4L806.5 251.1L806 251.5L802.4 247.4ZM809.1 270.8L813.4 274.7L812.9 275.2L815.3 275.8L814.6 273.4L814.1 273.9L809.8 270.1ZM816.3 293L821.4 296.6L821 297.2L823.5 297.5L822.4 295.2L822 295.8L816.9 292.2ZM823.3 314.6L829.1 318L828.8 318.6L831.5 318.9L830 316.6L829.6 317.2L823.8 313.8ZM829.9 335.9L836.5 339L836.2 339.7L839.2 339.8L837.3 337.5L837 338.1L830.3 335ZM836.2 356.8L843.7 359.7L843.4 360.4L846.6 360.3L844.3 358.1L844 358.8L836.6 355.8ZM842.2 377.3L850.4 380.1L850.2 380.8L853.6 380.6L851 378.3L850.8 379.1L842.6 376.4ZM848 397.7L856.9 400.2L856.6 401L860.3 400.6L857.4 398.3L857.1 399.2L848.2 396.7ZM853.4 417.8L862.9 420L862.7 421L866.6 420.4L863.4 418.1L863.1 419.1L853.6 416.8ZM858.4 437.7L868.6 439.8L868.4 440.8L872.4 440L869 437.7L868.8 438.8L858.6 436.7ZM863.2 457.4L873.8 459.3L873.6 460.4L877.9 459.5L874.2 457.2L874 458.3L863.3 456.4ZM867.6 477L878.7 478.8L878.5 479.9L882.9 478.9L879 476.6L878.8 477.8L867.7 476ZM871.7 496.5L883.1 498.1L883 499.3L887.5 498.2L883.5 495.9L883.3 497.1L871.8 495.5ZM875.4 515.9L887.2 517.3L887.1 518.6L891.6 517.4L887.5 515.1L887.3 516.4L875.5 514.9ZM878.8 535.3L890.9 536.5L890.7 537.8L895.4 536.5L891.1 534.2L891 535.5L878.9 534.3ZM881.8 554.5L894.2 555.6L894 557L898.8 555.6L894.4 553.3L894.3 554.6L881.9 553.5ZM884.5 573.7L897.1 574.7L896.9 576.1L901.7 574.6L897.2 572.3L897.1 573.7L884.6 572.7ZM886.9 592.9L899.6 593.8L899.5 595.1L904.3 593.6L899.7 591.3L899.6 592.7L886.9 591.8ZM888.9 612L901.7 612.7L901.6 614.1L906.4 612.5L901.8 610.3L901.7 611.7L888.9 610.9ZM890.5 631.1L903.4 631.7L903.3 633.1L908.2 631.4L903.5 629.2L903.5 630.6L890.5 630ZM891.8 650.1L904.8 650.6L904.7 652L909.6 650.3L904.9 648.1L904.8 649.5L891.8 649.1ZM892.7 669.2L905.8 669.5L905.7 670.9L910.6 669.1L905.8 667L905.8 668.4L892.7 668.1ZM893.2 688.2L906.4 688.4L906.4 689.8L911.3 687.9L906.4 685.9L906.4 687.3L893.2 687.1ZM893.4 707.2L906.6 707.2L906.6 708.7L911.5 706.7L906.6 704.7L906.6 706.2L893.4 706.2ZM311.3 101.8L311.3 118.9L309.5 118.9L312 125.3L314.5 118.9L312.7 118.9L312.7 101.8ZM331.1 102L330.8 118.9L329.1 118.9L331.5 125.2L334 119L332.2 119L332.5 102ZM350.9 102.5L350.4 119.3L348.7 119.2L350.9 125.5L353.6 119.4L351.8 119.3L352.3 102.5ZM370.7 103.4L370.1 119.9L368.3 119.9L370.5 126.1L373.2 120.1L371.4 120L372.1 103.4ZM390.6 104.6L389.7 120.9L388 120.9L390.1 127L392.8 121.1L391.1 121L391.9 104.7ZM410.5 106.2L409.5 122.3L407.8 122.2L409.8 128.2L412.5 122.4L410.8 122.3L411.8 106.3ZM430.4 108.1L429.3 123.9L427.7 123.8L429.6 129.8L432.3 124.1L430.6 124L431.7 108.2ZM450.4 110.4L449.3 125.9L447.7 125.7L449.5 131.6L452.2 126.1L450.6 125.9L451.7 110.5ZM470.4 113.1L469.4 128.1L467.8 128L469.6 133.7L472.2 128.3L470.6 128.2L471.7 113.2ZM490.5 116.1L489.6 130.7L488 130.6L489.8 136.1L492.3 130.9L490.8 130.8L491.8 116.2ZM510.8 119.4L510 133.5L508.5 133.5L510.2 138.8L512.6 133.7L511.1 133.6L511.9 119.5ZM531.1 123.1L530.5 136.7L529 136.6L530.8 141.8L533.1 136.8L531.6 136.8L532.2 123.1ZM551.5 127.1L551.2 140.2L549.8 140.1L551.6 145L553.7 140.2L552.3 140.2L552.6 127.1ZM572.1 131.4L572.1 143.9L570.7 143.9L572.6 148.5L574.4 143.9L573.1 143.9L573.2 131.4ZM592.9 136.1L593.2 147.9L591.9 147.9L593.8 152.2L595.4 147.8L594.2 147.9L593.9 136.1ZM613.8 141.1L614.4 152.1L613.3 152.2L615.2 156.2L616.6 152L615.4 152.1L614.8 141ZM635 146.4L636 156.7L634.9 156.8L636.8 160.5L638 156.5L636.9 156.6L636 146.3ZM656.5 152L657.6 161.5L656.6 161.6L658.5 164.9L659.5 161.3L658.6 161.4L657.5 151.9ZM678.2 157.9L679.5 166.6L678.7 166.7L680.5 169.7L681.3 166.3L680.5 166.4L679.2 157.8ZM700.4 164.1L701.8 171.9L701.1 172L702.8 174.7L703.5 171.6L702.8 171.7L701.4 164ZM722.9 170.6L724.6 177.5L723.9 177.7L725.6 180L726.2 177.2L725.5 177.3L723.9 170.4ZM746 177.4L747.8 183.5L747.1 183.7L748.9 185.5L749.4 183L748.8 183.2L747 177.1ZM769.6 184.5L771.6 189.7L771 189.9L772.8 191.4L773.2 189.1L772.6 189.3L770.6 184.2ZM794 191.9L796 196L795.4 196.3L797.4 197.5L797.6 195.2L796.9 195.5L794.9 191.4ZM819.1 199.5L821.2 202.7L820.6 203L822.7 204L822.6 201.7L822 202.1L819.9 198.9ZM826.7 224.6L829.4 227.7L828.9 228.2L831.1 228.9L830.7 226.6L830.1 227L827.4 224ZM834 249L837.5 252L837 252.5L839.3 252.9L838.6 250.7L838.1 251.2L834.7 248.2ZM841.1 272.6L845.4 275.6L845 276.1L847.3 276.3L846.4 274.2L846 274.7L841.7 271.8ZM847.9 295.7L853 298.5L852.7 299.1L855.2 299.1L853.8 297L853.5 297.6L848.4 294.8ZM854.5 318.3L860.4 320.9L860.1 321.5L862.7 321.4L861 319.3L860.8 320L854.9 317.4ZM860.7 340.4L867.4 342.8L867.2 343.5L870 343.2L868 341.2L867.7 341.9L861 339.5ZM866.6 362.2L874.1 364.4L873.9 365.1L877 364.8L874.6 362.8L874.4 363.5L866.9 361.3ZM872.2 383.7L880.5 385.7L880.3 386.5L883.7 386L880.9 383.9L880.7 384.7L872.5 382.7ZM877.5 404.9L886.5 406.7L886.3 407.6L889.9 406.9L886.9 404.9L886.7 405.7L877.7 403.9ZM882.5 425.8L892.1 427.5L891.9 428.5L895.8 427.6L892.5 425.6L892.3 426.5L882.7 424.8ZM887.2 446.5L897.4 448.1L897.2 449.1L901.2 448.2L897.7 446.1L897.5 447.1L887.3 445.6ZM891.5 467.1L902.2 468.5L902.1 469.6L906.2 468.6L902.5 466.4L902.3 467.5L891.6 466.1ZM895.5 487.6L906.6 488.8L906.5 490L910.8 488.8L906.9 486.7L906.8 487.8L895.6 486.6ZM899.2 507.9L910.7 509L910.6 510.2L915 508.9L910.9 506.8L910.8 508L899.3 506.9ZM902.5 528L914.4 529.1L914.2 530.3L918.8 529L914.6 526.8L914.4 528.1L902.6 527.1ZM905.5 548.2L917.6 549.1L917.5 550.4L922.1 548.9L917.8 546.8L917.7 548.1L905.6 547.2ZM908.2 568.2L920.5 569L920.4 570.3L925.1 568.8L920.7 566.7L920.6 568L908.2 567.2ZM910.5 588.2L923 588.9L922.9 590.2L927.6 588.6L923.1 586.5L923 587.8L910.5 587.1ZM912.4 608.1L925.1 608.7L925 610.1L929.8 608.4L925.2 606.3L925.1 607.7L912.5 607ZM914 628L926.8 628.5L926.8 629.8L931.6 628.1L926.9 626L926.9 627.4L914.1 626.9ZM915.3 647.8L928.2 648.2L928.1 649.6L933 647.8L928.3 645.8L928.2 647.1L915.3 646.7ZM916.2 667.6L929.2 667.9L929.1 669.3L934 667.5L929.2 665.4L929.2 666.8L916.2 666.6ZM916.7 687.4L929.8 687.6L929.8 689L934.6 687.1L929.8 685.1L929.8 686.5L916.7 686.4ZM916.9 707.2L930 707.2L930 708.6L934.9 706.7L930 704.8L930 706.2L916.9 706.2ZM311.3 77.3L311.3 94.3L309.5 94.3L312 100.6L314.5 94.3L312.7 94.3L312.7 77.3ZM331.9 77.5L331.6 94.3L329.8 94.2L332.2 100.5L334.7 94.3L333 94.3L333.3 77.5ZM352.5 78L351.9 94.6L350.2 94.5L352.4 100.7L355 94.7L353.3 94.6L353.9 78ZM373.2 78.8L372.3 95.2L370.6 95.1L372.6 101.3L375.4 95.4L373.6 95.3L374.5 78.9ZM393.8 80L392.7 96.2L391 96.1L393 102.2L395.8 96.4L394.1 96.3L395.2 80.1ZM414.5 81.6L413.3 97.4L411.6 97.3L413.5 103.4L416.2 97.7L414.6 97.5L415.8 81.7ZM435.3 83.5L433.9 99L432.3 98.9L434.1 104.8L436.8 99.3L435.2 99.1L436.6 83.6ZM456.1 85.8L454.7 100.9L453.1 100.8L454.8 106.6L457.6 101.2L456 101L457.4 85.9ZM477.1 88.4L475.7 103.1L474.1 103L475.8 108.6L478.5 103.4L476.9 103.2L478.3 88.5ZM498.1 91.3L496.8 105.6L495.3 105.5L496.9 110.9L499.5 105.8L498 105.7L499.2 91.4ZM519.2 94.6L518.1 108.4L516.6 108.2L518.3 113.5L520.7 108.6L519.2 108.5L520.3 94.7ZM540.5 98.2L539.6 111.4L538.2 111.3L539.9 116.3L542.1 111.6L540.7 111.5L541.6 98.3ZM561.9 102.1L561.3 114.7L560 114.7L561.7 119.4L563.7 114.8L562.4 114.8L562.9 102.2ZM583.5 106.4L583.3 118.3L582 118.3L583.7 122.8L585.6 118.4L584.3 118.4L584.5 106.4ZM605.3 111L605.4 122.2L604.2 122.2L606 126.3L607.6 122.2L606.4 122.2L606.3 111ZM627.3 115.9L627.8 126.3L626.8 126.4L628.5 130.2L629.9 126.2L628.8 126.3L628.3 115.9ZM649.6 121.1L650.4 130.7L649.5 130.8L651.2 134.2L652.4 130.6L651.4 130.6L650.6 121ZM672.2 126.6L673.2 135.4L672.3 135.5L674 138.5L675 135.2L674.2 135.3L673.2 126.5ZM695.3 132.4L696.3 140.3L695.6 140.4L697.2 143.1L698 140L697.3 140.1L696.3 132.3ZM718.7 138.5L719.9 145.5L719.2 145.6L720.8 147.9L721.6 145.2L720.9 145.3L719.7 138.4ZM742.7 144.9L744 150.9L743.3 151.1L744.9 153.1L745.6 150.6L744.9 150.7L743.6 144.7ZM767.2 151.6L768.6 156.7L768 156.9L769.7 158.5L770.3 156.2L769.6 156.4L768.1 151.3ZM792.4 158.6L793.9 162.5L793.2 162.8L795 164.2L795.5 161.9L794.8 162.2L793.3 158.2ZM818.4 165.8L819.9 168.7L819.2 169L821.2 170.3L821.4 167.9L820.8 168.3L819.3 165.3ZM845.3 173.3L846.7 175.3L846.2 175.7L848.3 176.7L848.1 174.3L847.5 174.8L846.1 172.7ZM852.8 200.2L854.7 202.3L854.2 202.7L856.4 203.4L855.9 201.1L855.4 201.6L853.5 199.5ZM860 226.2L862.5 228.3L862.1 228.9L864.4 229.2L863.6 227L863.2 227.5L860.6 225.5ZM867 251.5L870.3 253.5L869.9 254.1L872.2 254.2L871.2 252.1L870.8 252.7L867.5 250.6ZM873.7 276L877.9 278.1L877.5 278.7L879.9 278.5L878.6 276.6L878.3 277.2L874.1 275.1ZM880.1 300L885.2 302L885 302.6L887.3 302.3L885.8 300.4L885.6 301.1L880.4 299ZM886.2 323.4L892.1 325.3L891.9 326L894.5 325.5L892.7 323.7L892.4 324.4L886.5 322.5ZM892 346.4L898.8 348.2L898.6 348.9L901.4 348.3L899.2 346.5L899 347.2L892.3 345.5ZM897.5 369.1L905.1 370.7L904.9 371.4L908 370.8L905.4 369L905.3 369.7L897.7 368.1ZM902.7 391.4L911 392.9L910.9 393.7L914.2 392.9L911.4 391.1L911.2 391.9L902.9 390.4ZM907.6 413.4L916.6 414.8L916.5 415.7L920 414.8L916.9 412.9L916.8 413.8L907.8 412.4ZM912.2 435.2L921.9 436.4L921.7 437.4L925.5 436.4L922.1 434.5L922 435.5L912.3 434.2ZM916.5 456.8L926.7 457.9L926.6 459L930.5 457.8L926.9 455.9L926.8 456.9L916.6 455.8ZM920.4 478.2L931.1 479.2L931 480.3L935.1 479.1L931.3 477.1L931.2 478.2L920.5 477.2ZM924 499.4L935.2 500.3L935.1 501.5L939.3 500.2L935.3 498.2L935.2 499.3L924.1 498.4ZM927.3 520.5L938.8 521.4L938.7 522.6L943.1 521.2L939 519.1L938.9 520.4L927.4 519.5ZM930.2 541.5L942.1 542.3L942 543.5L946.5 542L942.2 540L942.1 541.3L930.3 540.5ZM932.8 562.4L944.9 563.1L944.9 564.4L949.4 562.8L945 560.8L945 562.1L932.9 561.4ZM935.1 583.3L947.4 583.8L947.3 585.2L952 583.5L947.5 581.5L947.4 582.8L935.1 582.2ZM937 604L949.5 604.5L949.5 605.8L954.1 604.2L949.6 602.1L949.5 603.5L937.1 603ZM938.6 624.7L951.2 625.1L951.2 626.5L955.9 624.8L951.3 622.7L951.3 624.1L938.6 623.7ZM939.8 645.4L952.6 645.7L952.5 647.1L957.3 645.3L952.6 643.3L952.6 644.6L939.8 644.3ZM940.7 666L953.6 666.2L953.5 667.6L958.3 665.8L953.6 663.8L953.6 665.2L940.7 665ZM941.2 686.6L954.2 686.7L954.2 688.1L959 686.2L954.2 684.3L954.2 685.7L941.2 685.6ZM941.4 707.2L954.4 707.2L954.4 708.6L959.2 706.7L954.4 704.8L954.4 706.2L941.4 706.2ZM311.3 52.8L311.3 69.6L309.5 69.6L312 75.8L314.5 69.6L312.7 69.6L312.7 52.8ZM332.7 53L332.3 69.6L330.6 69.6L332.9 75.8L335.4 69.7L333.7 69.6L334.1 53ZM354.1 53.5L353.4 69.9L351.7 69.8L353.8 76L356.5 70L354.7 69.9L355.5 53.5ZM375.6 54.3L374.5 70.5L372.8 70.4L374.8 76.5L377.5 70.7L375.8 70.6L376.9 54.4ZM397.1 55.5L395.7 71.4L394 71.3L395.9 77.4L398.7 71.7L397 71.5L398.4 55.6ZM418.6 57L417.1 72.6L415.4 72.5L417.1 78.5L420 72.9L418.3 72.8L419.9 57.2ZM440.2 58.9L438.5 74.2L436.9 74L438.5 79.9L441.4 74.5L439.8 74.3L441.5 59ZM461.9 61.1L460.2 76L458.6 75.8L460.1 81.6L463 76.3L461.4 76.1L463.1 61.3ZM483.7 63.7L482 78.1L480.5 77.9L482 83.5L484.7 78.4L483.2 78.2L484.9 63.8ZM505.6 66.6L504 80.5L502.6 80.3L504 85.7L506.7 80.8L505.2 80.6L506.7 66.7ZM527.6 69.8L526.3 83.2L524.9 83L526.4 88.2L528.8 83.4L527.4 83.3L528.7 69.9ZM549.8 73.3L548.8 86.1L547.4 86L548.9 90.9L551.2 86.3L549.9 86.2L550.9 73.4ZM572.2 77.2L571.6 89.3L570.2 89.2L571.8 93.8L573.9 89.4L572.5 89.4L573.2 77.3ZM594.8 81.4L594.5 92.8L593.3 92.7L594.9 97L596.7 92.8L595.5 92.8L595.8 81.4ZM617.6 85.9L617.8 96.5L616.7 96.5L618.3 100.4L619.9 96.5L618.8 96.5L618.6 85.9ZM640.8 90.7L641.3 100.5L640.3 100.5L642 104.1L643.3 100.4L642.3 100.4L641.8 90.7ZM664.2 95.8L664.9 104.7L664 104.8L665.6 107.9L666.7 104.6L665.9 104.6L665.2 95.8ZM688 101.2L688.8 109.2L688 109.3L689.6 112.1L690.5 109L689.8 109.1L689 101.1ZM712.3 106.9L713.1 113.9L712.4 114L713.9 116.5L714.8 113.7L714.1 113.8L713.3 106.8ZM737 112.9L738 119L737.3 119.1L738.8 121.1L739.7 118.7L739 118.8L738 112.8ZM762.4 119.2L763.4 124.3L762.7 124.4L764.3 126.1L765.1 123.9L764.4 124.1L763.4 119ZM788.4 125.8L789.4 129.6L788.8 129.8L790.5 131.4L791.1 129.2L790.4 129.4L789.3 125.5ZM815.2 132.6L816.2 135.4L815.5 135.6L817.4 137L817.8 134.8L817.1 135L816.1 132.3ZM842.8 139.7L843.8 141.5L843.2 141.9L845.2 143.1L845.3 140.7L844.7 141.1L843.7 139.2ZM871.5 147.1L872.3 148.2L871.8 148.6L874 149.4L873.7 147.1L873.1 147.5L872.3 146.5ZM878.9 175.8L880.1 177L879.6 177.5L881.9 178L881.3 175.8L880.8 176.3L879.6 175.1ZM886 203.5L887.7 204.8L887.3 205.3L889.6 205.6L888.7 203.4L888.3 204L886.6 202.7ZM892.8 230.3L895.2 231.7L894.9 232.3L897.2 232.2L896.1 230.2L895.7 230.8L893.3 229.4ZM899.4 256.3L902.7 257.7L902.4 258.4L904.7 258.1L903.3 256.2L903.1 256.8L899.8 255.4ZM905.7 281.6L909.9 283.1L909.7 283.7L911.9 283.3L910.4 281.5L910.2 282.1L906 280.7ZM911.7 306.4L916.9 307.8L916.7 308.5L919 307.9L917.4 306.2L917.2 306.9L912 305.4ZM917.4 330.7L923.4 332L923.3 332.7L925.8 332L923.8 330.3L923.7 331L917.6 329.7ZM922.8 354.5L929.7 355.7L929.5 356.4L932.3 355.7L930 354L929.8 354.7L923 353.5ZM927.9 377.9L935.6 379.1L935.5 379.8L938.5 379L935.8 377.4L935.7 378.1L928.1 376.9ZM932.7 401L941.1 402.1L941 402.9L944.3 402L941.4 400.3L941.3 401.1L932.9 400.1ZM937.2 423.9L946.3 424.8L946.2 425.7L949.7 424.7L946.5 422.9L946.4 423.8L937.3 422.9ZM941.4 446.5L951.1 447.3L951 448.3L954.8 447.1L951.3 445.3L951.2 446.3L941.5 445.5ZM945.3 468.8L955.6 469.6L955.5 470.7L959.4 469.4L955.7 467.6L955.6 468.6L945.4 467.8ZM948.8 491L959.6 491.7L959.5 492.8L963.6 491.5L959.7 489.6L959.6 490.7L948.9 490ZM952.1 513L963.2 513.7L963.2 514.8L967.4 513.4L963.3 511.5L963.3 512.7L952.1 512ZM954.9 534.9L966.5 535.5L966.4 536.7L970.8 535.2L966.6 533.2L966.5 534.5L955 533.9ZM957.5 556.7L969.3 557.2L969.3 558.5L973.7 556.9L969.4 554.9L969.4 556.2L957.5 555.7ZM959.7 578.4L971.8 578.8L971.8 580.1L976.3 578.5L971.9 576.5L971.8 577.8L959.8 577.4ZM961.6 600L973.9 600.3L973.9 601.7L978.5 600L974 598L973.9 599.3L961.6 598.9ZM963.1 621.5L975.6 621.8L975.6 623.1L980.3 621.4L975.7 619.4L975.7 620.8L963.2 620.5ZM964.3 643L977 643.2L977 644.6L981.7 642.8L977 640.8L977 642.2L964.4 641.9ZM965.2 664.4L978 664.6L977.9 665.9L982.7 664.1L978 662.2L978 663.5L965.2 663.4ZM965.7 685.8L978.6 685.9L978.6 687.3L983.3 685.4L978.6 683.5L978.6 684.8L965.7 684.8ZM965.9 707.2L978.8 707.2L978.8 708.6L983.6 706.7L978.8 704.8L978.8 706.2L965.9 706.2ZM311.3 25.8L311.3 42.4L309.6 42.4L312 48.6L314.4 42.4L312.7 42.4L312.7 25.8ZM333.6 26L333.2 42.4L331.4 42.4L333.7 48.5L336.2 42.5L334.5 42.4L335 26ZM355.9 26.4L355.1 42.7L353.3 42.6L355.4 48.7L358.1 42.8L356.4 42.7L357.3 26.5ZM378.3 27.3L377 43.2L375.3 43.1L377.2 49.2L380 43.5L378.3 43.3L379.6 27.4ZM400.6 28.4L399.1 44.1L397.4 44L399.1 50L402 44.4L400.4 44.2L401.9 28.6ZM423.1 29.9L421.3 45.3L419.7 45.1L421.2 51L424.2 45.6L422.5 45.4L424.4 30.1ZM445.6 31.8L443.6 46.7L442.1 46.5L443.5 52.4L446.5 47.1L444.9 46.9L446.9 31.9ZM468.2 33.9L466.2 48.5L464.7 48.3L466.1 54L468.9 48.9L467.4 48.7L469.4 34.1ZM491 36.4L489 50.5L487.5 50.3L488.8 55.8L491.7 50.9L490.2 50.7L492.2 36.6ZM513.9 39.3L512.1 52.8L510.6 52.6L511.9 57.9L514.6 53.2L513.2 53L515 39.4ZM536.9 42.4L535.4 55.4L534 55.2L535.3 60.2L537.8 55.7L536.4 55.5L538 42.6ZM560.2 45.9L559 58.2L557.7 58L559.1 62.8L561.3 58.4L560 58.3L561.2 46ZM583.6 49.7L582.9 61.2L581.6 61.2L583.1 65.5L585.1 61.4L583.9 61.3L584.6 49.8ZM607.3 53.8L607 64.6L605.9 64.5L607.4 68.5L609.1 64.6L608 64.6L608.3 53.8ZM631.3 58.2L631.5 68.1L630.5 68.1L632.1 71.8L633.5 68.1L632.5 68.1L632.3 58.2ZM655.6 63L656.1 71.9L655.2 72L656.7 75.2L657.9 71.8L657.1 71.9L656.6 62.9ZM680.3 68L680.8 76L680.1 76L681.5 78.9L682.6 75.8L681.8 75.9L681.3 67.9ZM705.4 73.3L706 80.3L705.3 80.3L706.7 82.8L707.7 80.1L707 80.2L706.4 73.2ZM731.1 78.9L731.7 84.9L731 85L732.5 87.1L733.4 84.7L732.7 84.8L732 78.7ZM757.3 84.7L758 89.7L757.3 89.8L758.8 91.6L759.7 89.4L759 89.5L758.2 84.6ZM784.1 90.9L784.9 94.6L784.2 94.7L785.8 96.4L786.5 94.2L785.8 94.4L785.1 90.7ZM811.7 97.3L812.5 99.8L811.8 100L813.5 101.6L814.1 99.4L813.4 99.6L812.7 97ZM840.2 104L840.9 105.6L840.2 105.8L842.1 107.2L842.4 104.9L841.8 105.2L841.2 103.6ZM869.7 111L870.2 111.8L869.6 112.1L871.7 113.2L871.7 110.9L871.1 111.2L870.6 110.5ZM900.4 118.2L900.7 118.5L900.2 119L902.4 119.6L901.9 117.3L901.4 117.8L901.2 117.6ZM907.6 148.9L908.2 149.4L907.7 149.9L910 150.2L909.2 148L908.8 148.6L908.3 148.1ZM914.6 178.4L915.6 179L915.2 179.6L917.6 179.7L916.5 177.6L916.1 178.2L915.1 177.6ZM921.3 206.9L922.9 207.7L922.6 208.3L924.9 208.1L923.6 206.2L923.3 206.8L921.7 206ZM927.7 234.6L930.1 235.4L929.8 236.1L932.1 235.6L930.7 233.8L930.4 234.5L928.1 233.6ZM933.9 261.4L937.1 262.4L936.9 263L939.2 262.4L937.6 260.7L937.4 261.4L934.2 260.5ZM939.8 287.6L944 288.6L943.8 289.3L946.1 288.5L944.4 286.9L944.2 287.6L940 286.7ZM945.4 313.3L950.7 314.2L950.5 314.9L952.7 314.1L951 312.5L950.8 313.2L945.6 312.3ZM950.7 338.4L956.8 339.3L956.7 340L959.1 339.1L957 337.6L956.9 338.3L950.8 337.4ZM955.7 363.1L962.6 363.9L962.5 364.6L965.2 363.7L962.8 362.2L962.7 362.9L955.8 362.1ZM960.4 387.4L968.1 388.2L968 388.9L971 387.9L968.3 386.5L968.2 387.2L960.5 386.4ZM964.8 411.4L973.2 412.1L973.2 412.9L976.4 411.8L973.4 410.3L973.3 411.1L964.9 410.4ZM968.9 435.1L978 435.7L978 436.6L981.4 435.4L978.2 433.8L978.1 434.7L969 434.1ZM972.7 458.5L982.4 459.1L982.4 460.1L986.1 458.8L982.6 457.1L982.5 458.1L972.8 457.5ZM976.2 481.7L986.5 482.2L986.4 483.3L990.3 481.9L986.6 480.2L986.5 481.2L976.2 480.7ZM979.3 504.8L990.1 505.2L990.1 506.3L994.1 504.9L990.2 503.1L990.1 504.2L979.4 503.8ZM982.2 527.6L993.3 528L993.3 529.2L997.5 527.7L993.4 525.9L993.4 527L982.2 526.6ZM984.7 550.4L996.2 550.7L996.2 551.9L1000.5 550.3L996.3 548.5L996.2 549.7L984.7 549.4ZM986.8 573L998.7 573.3L998.6 574.5L1003.1 572.9L998.7 571L998.7 572.3L986.9 572ZM988.7 595.5L1000.8 595.7L1000.7 597.1L1005.3 595.3L1000.8 593.4L1000.8 594.7L988.7 594.5ZM990.2 617.9L1002.5 618.1L1002.5 619.5L1007.1 617.7L1002.5 615.8L1002.5 617.1L990.2 616.9ZM991.4 640.3L1003.9 640.5L1003.8 641.8L1008.5 640L1003.9 638.1L1003.9 639.4L991.4 639.3ZM992.2 662.6L1004.8 662.8L1004.8 664.1L1009.5 662.3L1004.9 660.4L1004.9 661.7L992.2 661.6ZM992.7 684.9L1005.5 685L1005.5 686.4L1010.2 684.5L1005.5 682.6L1005.5 683.9L992.7 683.9ZM992.9 707.2L1005.7 707.2L1005.7 708.6L1010.5 706.7L1005.7 704.8L1005.7 706.2L992.9 706.2ZM311.3 -0.3L311.3 16.2L309.6 16.2L312 22.3L314.4 16.2L312.7 16.2L312.7 -0.3ZM334.5 -0.2L334 16.1L332.3 16.1L334.5 22.2L337.1 16.2L335.3 16.2L335.8 -0.1ZM357.6 0.3L356.7 16.4L355 16.3L357.1 22.4L359.7 16.5L358.1 16.5L359 0.4ZM380.8 1.1L379.5 16.9L377.9 16.8L379.7 22.8L382.5 17.2L380.8 17L382.1 1.2ZM404.1 2.3L402.5 17.7L400.8 17.6L402.5 23.5L405.4 18.1L403.7 17.9L405.4 2.4ZM427.4 3.7L425.5 18.9L424 18.7L425.5 24.5L428.4 19.2L426.8 19L428.7 3.9ZM450.8 5.5L448.8 20.3L447.3 20L448.7 25.8L451.6 20.6L450 20.4L452.1 5.7ZM474.4 7.7L472.3 21.9L470.8 21.7L472.1 27.3L475 22.3L473.5 22.1L475.6 7.8ZM498.1 10.1L496.1 23.8L494.6 23.6L495.9 29L498.6 24.2L497.2 24L499.2 10.3ZM521.9 12.9L520.1 26L518.7 25.8L519.9 31L522.6 26.4L521.2 26.2L523 13ZM545.9 16L544.4 28.5L543 28.3L544.3 33.1L546.8 28.8L545.4 28.6L547 16.1ZM570.2 19.4L569 31.1L567.7 31L569.1 35.5L571.3 31.4L570 31.2L571.2 19.5ZM594.6 23.1L593.9 34.1L592.8 34L594.2 38.1L596.1 34.2L594.9 34.1L595.6 23.2ZM619.4 27.2L619.2 37.2L618.2 37.2L619.7 40.9L621.2 37.2L620.2 37.2L620.4 27.2ZM644.5 31.5L644.8 40.6L643.9 40.6L645.4 44L646.7 40.5L645.8 40.6L645.5 31.5ZM669.9 36.1L670.3 44.2L669.6 44.3L671 47.2L672.1 44.2L671.3 44.2L670.9 36.1ZM695.8 41L696.3 48.1L695.6 48.2L696.9 50.7L698 48L697.3 48.1L696.8 41ZM722.2 46.2L722.7 52.3L722 52.3L723.4 54.5L724.4 52.2L723.7 52.2L723.2 46.1ZM749.2 51.7L749.7 56.6L749 56.7L750.4 58.6L751.4 56.4L750.7 56.5L750.2 51.6ZM776.8 57.5L777.3 61.1L776.6 61.2L778.1 63L779 60.8L778.3 60.9L777.8 57.3ZM805.1 63.5L805.6 65.9L805 66L806.5 67.8L807.3 65.6L806.6 65.7L806.1 63.3ZM834.3 69.8L834.7 71.2L834.1 71.4L835.8 72.9L836.4 70.7L835.7 70.9L835.3 69.5ZM864.5 76.4L864.7 76.9L864.1 77.2L866 78.5L866.3 76.2L865.6 76.5L865.4 76ZM895.8 83.3L895.8 83.2L895.2 83.7L897.4 84.5L897.1 82.2L896.6 82.6L896.6 82.7ZM928.4 90.4L928.1 90.1L927.7 90.7L930 91L929.1 88.8L928.7 89.3L929 89.6ZM935.5 122.9L935.4 122.9L935.1 123.5L937.4 123.5L936.3 121.5L936 122.1L936 122.1ZM942.3 154.2L942.7 154.4L942.3 155L944.7 154.8L943.4 152.9L943.1 153.5L942.7 153.3ZM948.9 184.4L949.8 184.7L949.5 185.4L951.8 184.9L950.4 183.1L950.1 183.8L949.2 183.4ZM955.2 213.6L956.7 214L956.5 214.7L958.8 214.1L957.2 212.4L957 213.1L955.4 212.6ZM961.2 241.9L963.6 242.4L963.4 243.1L965.6 242.4L964 240.8L963.8 241.5L961.4 240.9ZM967 269.5L970.3 270.1L970.1 270.8L972.3 270L970.6 268.4L970.4 269.1L967.1 268.5ZM972.4 296.5L976.7 297.1L976.6 297.8L978.8 296.9L977 295.4L976.9 296.1L972.6 295.5ZM977.6 322.9L983 323.5L982.9 324.2L985.1 323.2L983.2 321.8L983.1 322.5L977.8 321.9ZM982.6 348.8L988.7 349.3L988.7 350L991.1 349L988.9 347.6L988.8 348.3L982.6 347.8ZM987.2 374.2L994.2 374.8L994.1 375.4L996.8 374.4L994.3 373.1L994.2 373.8L987.3 373.2ZM991.5 399.3L999.3 399.8L999.2 400.5L1002.2 399.5L999.4 398.1L999.3 398.8L991.6 398.3ZM995.5 424.1L1004 424.5L1004 425.3L1007.2 424.2L1004.1 422.7L1004.1 423.5L995.6 423.1ZM999.2 448.5L1008.4 448.9L1008.4 449.9L1011.8 448.6L1008.5 447L1008.4 447.9L999.3 447.5ZM1002.6 472.8L1012.4 473.1L1012.4 474.1L1016.1 472.8L1012.5 471.1L1012.5 472.1L1002.7 471.8ZM1005.7 496.8L1016.1 497.1L1016 498.2L1019.9 496.7L1016.1 495L1016.1 496.1L1005.7 495.8ZM1008.5 520.6L1019.3 520.9L1019.3 522L1023.3 520.5L1019.4 518.7L1019.3 519.9L1008.5 519.6ZM1010.9 544.2L1022.2 544.5L1022.1 545.7L1026.3 544.1L1022.2 542.3L1022.2 543.5L1011 543.2ZM1013.1 567.7L1024.6 568L1024.6 569.2L1028.9 567.6L1024.7 565.7L1024.7 567L1013.1 566.7ZM1014.9 591.2L1026.7 591.3L1026.7 592.6L1031.1 590.9L1026.8 589.1L1026.8 590.3L1014.9 590.2ZM1016.4 614.5L1028.5 614.6L1028.5 615.9L1033 614.2L1028.5 612.3L1028.5 613.6L1016.4 613.5ZM1017.5 637.7L1029.8 637.8L1029.8 639.2L1034.4 637.4L1029.9 635.5L1029.8 636.8L1017.5 636.7ZM1018.3 660.9L1030.8 661L1030.8 662.4L1035.5 660.5L1030.8 658.6L1030.8 660L1018.3 659.9ZM1018.8 684.1L1031.5 684.1L1031.5 685.5L1036.1 683.6L1031.5 681.7L1031.5 683.1L1018.8 683ZM1019 707.2L1031.8 707.2L1031.8 708.6L1036.5 706.7L1031.8 704.8L1031.8 706.2L1019 706.2ZM555.7 -12.6L554.2 -0.7L552.9 -0.9L554.2 3.7L556.5 -0.5L555.2 -0.6L556.7 -12.5ZM581 -9.3L580 1.8L578.8 1.7L580.1 5.9L582.1 2L580.9 1.9L582 -9.2ZM606.6 -5.7L606 4.5L605 4.5L606.4 8.3L608.1 4.6L607 4.6L607.6 -5.6ZM632.5 -1.7L632.5 7.5L631.6 7.5L633 10.9L634.4 7.5L633.5 7.5L633.5 -1.7ZM658.8 2.5L659 10.7L658.3 10.8L659.6 13.7L660.8 10.7L660 10.7L659.8 2.5ZM685.5 7L685.8 14.2L685.1 14.2L686.4 16.8L687.5 14.1L686.8 14.1L686.5 7ZM712.7 11.8L713 17.9L712.3 17.9L713.7 20.1L714.7 17.8L714 17.8L713.7 11.8ZM740.5 16.9L740.8 21.8L740.1 21.8L741.5 23.7L742.5 21.6L741.8 21.7L741.5 16.8ZM768.9 22.3L769.2 25.8L768.5 25.8L769.9 27.7L770.9 25.6L770.2 25.6L769.8 22.2ZM798 27.9L798.3 30.1L797.6 30.2L799.1 32L800 29.9L799.3 30L799 27.8ZM827.9 33.8L828.2 35L827.5 35.1L829.1 36.8L829.8 34.6L829.1 34.7L828.9 33.6ZM858.8 40L858.9 40.3L858.2 40.5L860 42L860.5 39.7L859.8 40L859.7 39.7ZM890.8 46.5L890.6 46.2L890 46.6L892.1 47.7L892.1 45.4L891.5 45.7L891.6 46ZM924 53.2L923.6 52.7L923.1 53.2L925.3 53.9L924.9 51.6L924.3 52.1L924.8 52.5ZM958.7 60.1L958 59.7L957.6 60.2L959.9 60.4L959.1 58.3L958.6 58.9L959.3 59.3ZM965.6 94.8L965.1 94.5L964.8 95.1L967.1 95L965.9 93L965.6 93.6L966.1 93.9ZM972.3 128L972.1 127.9L971.9 128.6L974.2 128.1L972.7 126.3L972.4 127L972.6 127ZM978.7 159.9L979 160L978.8 160.7L981.1 160L979.4 158.4L979.3 159L979 159ZM984.9 190.8L985.8 191L985.6 191.7L987.8 190.9L986.1 189.3L986 190L985.1 189.8ZM990.8 220.7L992.4 221L992.2 221.7L994.4 220.8L992.6 219.3L992.5 220L990.9 219.7ZM996.4 249.8L998.8 250.2L998.7 250.9L1000.9 249.9L999 248.5L999 249.2L996.5 248.9ZM1001.8 278.2L1005.1 278.6L1005 279.3L1007.2 278.3L1005.3 276.9L1005.2 277.6L1001.9 277.2ZM1006.8 306L1011.2 306.4L1011.2 307.1L1013.3 306L1011.4 304.7L1011.3 305.4L1006.9 305ZM1011.6 333.2L1017.1 333.6L1017 334.3L1019.1 333.2L1017.2 331.9L1017.1 332.6L1011.7 332.2ZM1016.2 359.9L1022.4 360.3L1022.4 361L1024.7 359.9L1022.5 358.6L1022.5 359.3L1016.2 358.9ZM1020.4 386.2L1027.4 386.5L1027.4 387.2L1030.1 386.2L1027.5 384.8L1027.5 385.5L1020.4 385.2ZM851.6 3L851.6 3.2L851 3.3L852.6 5L853.3 2.7L852.6 2.9L852.6 2.7ZM884.2 9L884.1 8.7L883.5 9L885.3 10.4L885.7 8.1L885 8.3L885.2 8.7ZM918.1 15.3L917.7 14.7L917.1 15.1L919.2 16.2L919.2 13.8L918.6 14.2L919 14.8ZM953.3 21.9L952.7 21.2L952.2 21.7L954.4 22.3L953.9 20L953.4 20.5L954.1 21.2ZM990.1 28.7L989.3 28L988.9 28.6L991.2 28.8L990.3 26.7L989.8 27.2L990.7 27.9ZM996.9 65.4L996.1 65.1L995.8 65.7L998.2 65.5L996.9 63.5L996.6 64.2L997.4 64.5ZM1003.5 100.6L1002.9 100.5L1002.7 101.1L1005 100.6L1003.4 98.9L1003.2 99.5L1003.8 99.7ZM1009.7 134.5L1009.5 134.4L1009.4 135.1L1011.6 134.4L1009.9 132.8L1009.8 133.5L1010 133.5ZM1015.8 167.1L1016.1 167.2L1016 167.9L1018.1 167L1016.3 165.5L1016.2 166.2L1015.9 166.1Z"/>
<path shape-rendering="crispEdges" fill="#e00000" d="M592.6 443.8L596.6 449.4L596.1 449.8L598.5 451.2L598 448.4L597.4 448.8L593.4 443.2ZM601.1 453.2L605.6 458.2L605.1 458.7L607.7 459.7L606.9 457.1L606.4 457.5L601.8 452.5ZM609.3 462.8L614.4 467.3L613.9 467.8L616.6 468.5L615.5 466L615 466.5L609.9 462.1ZM617.2 472.7L622.8 476.6L622.4 477.2L625.2 477.6L623.8 475.2L623.4 475.8L617.7 471.9ZM624.7 482.9L630.9 486.3L630.6 486.9L633.5 487.1L631.7 484.8L631.4 485.4L625.2 482ZM631.9 493.3L638.7 496.2L638.4 496.8L641.4 496.8L639.4 494.6L639.1 495.2L632.3 492.3ZM638.8 503.9L646.2 506.3L646 507L649.1 506.8L646.7 504.7L646.5 505.4L639.1 502.9ZM645.3 514.7L653.3 516.7L653.1 517.5L656.4 517L653.7 515L653.6 515.8L645.5 513.7ZM651.4 525.7L660.1 527.4L659.9 528.2L663.3 527.6L660.4 525.6L660.2 526.4L651.6 524.7ZM657.2 536.9L666.4 538.3L666.3 539.2L669.9 538.3L666.7 536.4L666.6 537.3L657.4 535.9ZM662.6 548.3L672.4 549.4L672.3 550.4L676.1 549.3L672.7 547.4L672.5 548.4L662.7 547.3ZM667.7 559.9L678 560.7L677.9 561.8L681.9 560.6L678.2 558.7L678.1 559.7L667.7 558.9ZM672.3 571.6L683.2 572.3L683.1 573.4L687.3 572L683.3 570.1L683.3 571.3L672.4 570.6ZM676.5 583.4L688 583.9L687.9 585.2L692.2 583.6L688.1 581.7L688 582.9L676.6 582.4ZM680.4 595.4L692.3 595.8L692.3 597.1L696.8 595.4L692.4 593.5L692.4 594.8L680.4 594.4ZM683.9 607.6L696.3 607.8L696.2 609.2L700.9 607.4L696.3 605.5L696.3 606.8L683.9 606.6ZM686.9 619.8L699.7 619.9L699.7 621.3L704.5 619.5L699.8 617.5L699.8 618.9L686.9 618.8ZM689.6 632.1L702.8 632.2L702.8 633.6L707.6 631.7L702.8 629.7L702.8 631.2L689.6 631.1ZM691.9 644.5L705.3 644.5L705.3 646L710.3 644.1L705.4 642L705.3 643.5L691.9 643.5ZM693.7 656.9L707.5 657L707.5 658.5L712.5 656.5L707.5 654.4L707.5 656L693.7 655.9ZM695.1 669.5L709.1 669.5L709.1 671L714.3 669L709.1 666.9L709.1 668.5L695.1 668.5ZM696.2 682L710.3 682L710.3 683.6L715.5 681.5L710.3 679.4L710.3 681L696.2 681ZM696.8 694.6L711 694.6L711 696.2L716.3 694.1L711 692L711 693.6L696.8 693.6ZM697 707.2L711.2 707.2L711.2 708.8L716.5 706.7L711.2 704.6L711.2 706.2L697 706.2Z"/>
</g>
<g>
<text x="324.5" y="703.6" font-size="14.5" stroke="#000" stroke-width="0.5" font-weight="bold" textLength="8.2" lengthAdjust="spacingAndGlyphs">Y</text>
<path fill="#e00000" d="M306 711H375.2V709.2L384 712.3L375.2 715.4V714H306Z"/>
<path fill="#0000f0" d="M305 713.6V643.8H303L306.5 634L310 643.8H308V713.6Z"/>
<path fill="#008c00" d="M307.4 713.3L329.9 691.2L330.7 692L332.2 686.8L326.9 688.2L327.8 689L305.2 711.1Z"/>
</g>
<path fill="#000" d="M0 0H1023V767H0ZM2 2V765H255V2ZM257 2V765H1021V2Z" fill-rule="evenodd"/>
<rect x="11" y="59" width="234" height="2" fill="#000"/>
<rect x="36.5" y="100.5" width="12" height="16" fill="#00ffff" stroke="#000" stroke-width="1"/>
<path fill="#000" d="M23 189H54V184.2L64.4 190L54 195.8V191H23Z"/>
<path fill="#f00" d="M23 266H54V261.2L64.4 267L54 272.8V268H23Z"/>
<text x="68.8" y="31.3" font-size="31" font-weight="bold" fill="#6633ff" textLength="120.5" lengthAdjust="spacingAndGlyphs">3DEC 9.6</text>
<text x="49.7" y="49.5" font-size="10" fill="#6633ff" textLength="158" lengthAdjust="spacingAndGlyphs">©2025 Itasca Consulting Group, Inc.</text>
<text x="13" y="80" font-size="15" font-weight="bold" textLength="61" lengthAdjust="spacingAndGlyphs">Block  ID</text>
<text x="24.4" y="97" font-size="12" textLength="70" lengthAdjust="spacingAndGlyphs">Cut Plane: on</text>
<text x="60.3" y="112.8" font-size="12" textLength="23.6" lengthAdjust="spacingAndGlyphs">3888</text>
<text x="13" y="131.5" font-size="15" font-weight="bold" textLength="192" lengthAdjust="spacingAndGlyphs">Block Displacement Vectors</text>
<text x="24.4" y="148.8" font-size="12" textLength="70" lengthAdjust="spacingAndGlyphs">Cut Plane: on</text>
<text y="164.7" font-size="12"><tspan x="24.4" textLength="55" lengthAdjust="spacingAndGlyphs">Maximum:</tspan> <tspan x="83.9" textLength="51.2" lengthAdjust="spacingAndGlyphs">0.0355367</tspan></text>
<text x="24.4" y="180.7" font-size="12" textLength="44.5" lengthAdjust="spacingAndGlyphs">Scale: 10</text>
<text x="12.6" y="208.5" font-size="15" font-weight="bold" textLength="174.4" lengthAdjust="spacingAndGlyphs">Structural Displacements</text>
<text x="24.4" y="225.7" font-size="12" textLength="70" lengthAdjust="spacingAndGlyphs">Cut Plane: on</text>
<text y="241.7" font-size="12"><tspan x="24.4" textLength="55" lengthAdjust="spacingAndGlyphs">Maximum:</tspan> <tspan x="83.9" textLength="51.2" lengthAdjust="spacingAndGlyphs">0.0351331</tspan></text>
<text x="24.4" y="257.7" font-size="12" textLength="44.5" lengthAdjust="spacingAndGlyphs">Scale: 10</text>
<text x="297.2" y="629" font-size="16.5" stroke="#0000f0" stroke-width="0.5" font-weight="bold" fill="#0000f0" textLength="9" lengthAdjust="spacingAndGlyphs">Z</text>
<text x="385.5" y="730.8" font-size="16" stroke="#000" stroke-width="0.5" font-weight="bold" textLength="10.4" lengthAdjust="spacingAndGlyphs">X</text>
</svg>
</body></html>
